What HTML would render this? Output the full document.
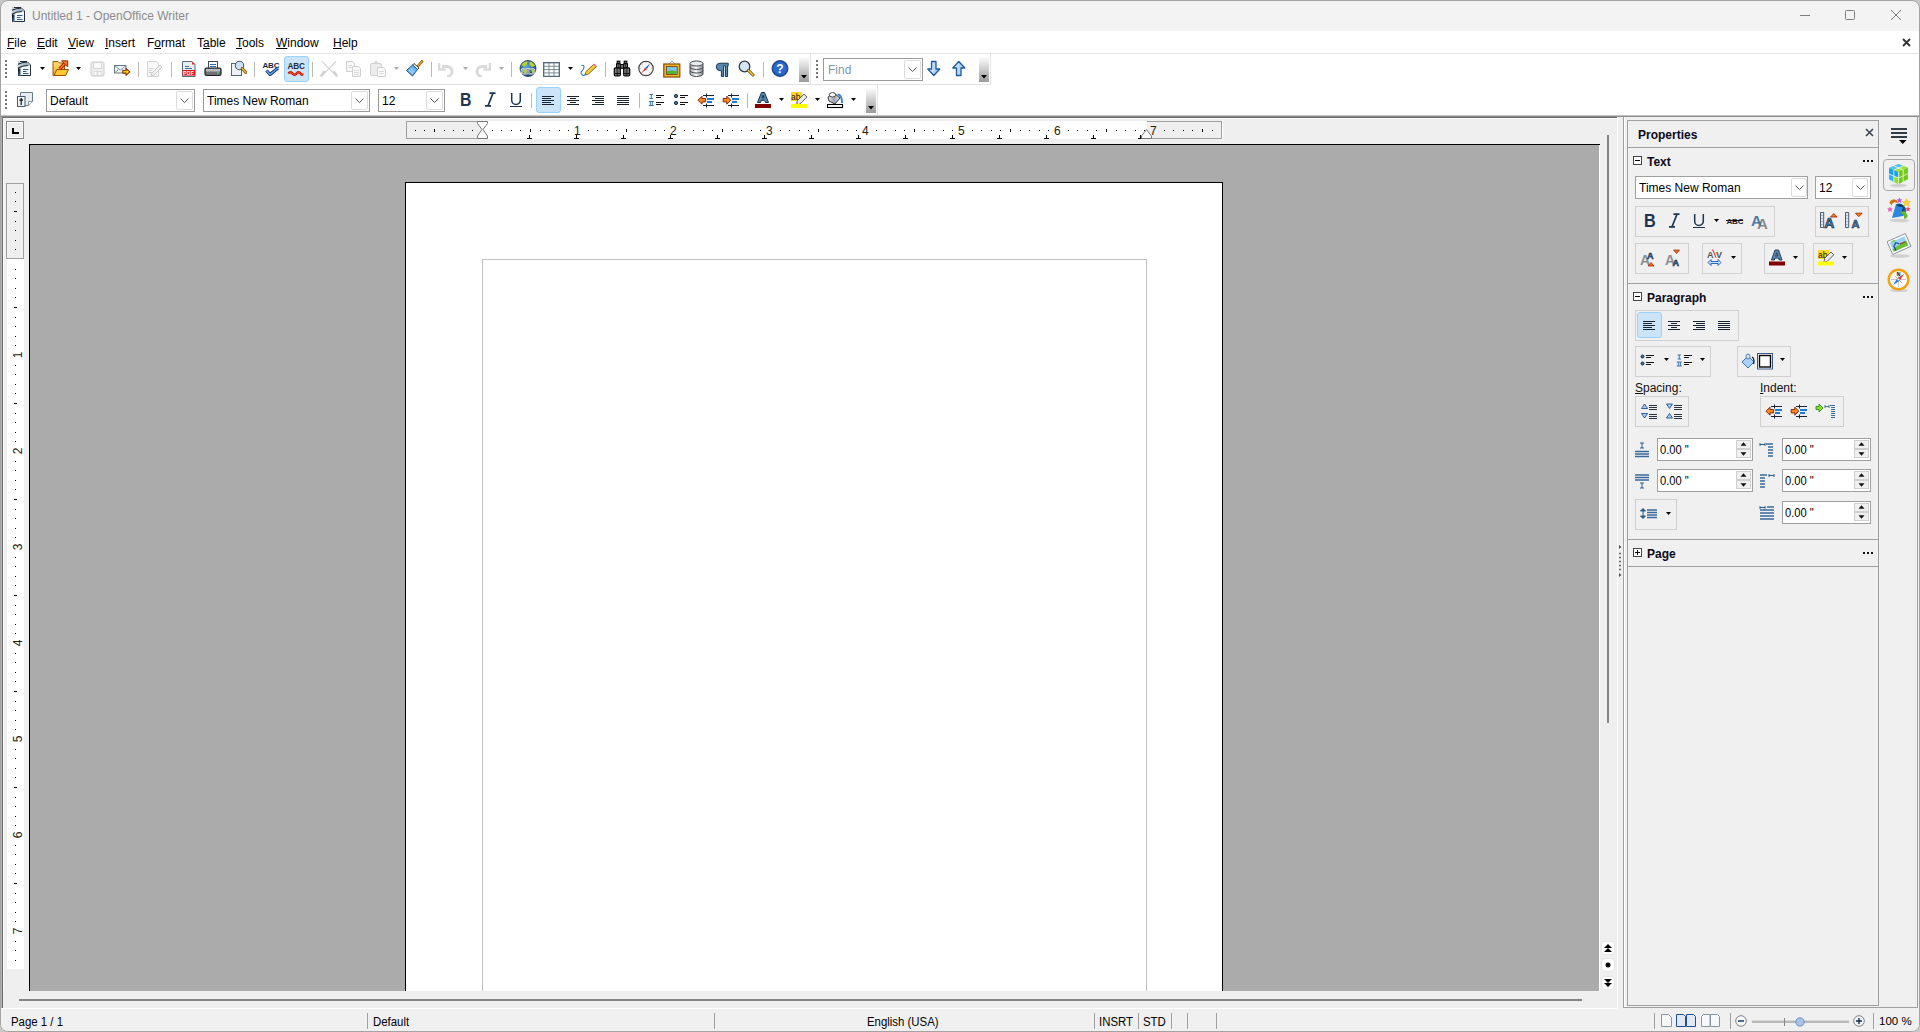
<!DOCTYPE html>
<html><head><meta charset="utf-8"><style>
*{box-sizing:border-box}
html,body{margin:0;padding:0;width:1920px;height:1032px;overflow:hidden;background:#c8c8c8;font-family:"Liberation Sans",sans-serif;font-size:12px;color:#000}
.a{position:absolute}
.t{position:absolute;white-space:pre;line-height:1}
svg{shape-rendering:geometricPrecision}
</style></head><body>
<div class="a" style="left:0px;top:0px;width:1920px;height:1032px;border:1px solid #a3a3a3;border-radius:8px;background:#f3f3f3"></div>
<svg class="a" style="left:11px;top:6px" width="15" height="17" viewBox="0 0 15 17"><defs><linearGradient id="gti" x1="0" y1="0" x2="1" y2="1"><stop offset="0" stop-color="#000"/><stop offset="1" stop-color="#5a8ab8"/></linearGradient>
<linearGradient id="gtib" x1="0" y1="0" x2="1" y2="0"><stop offset="0" stop-color="#c8d4de"/><stop offset="1" stop-color="#8aa0b4"/></linearGradient></defs>
<path d="M1.5 1.5H10l3.5 3.5v10.5h-12z" fill="#f6f9fc" stroke="#252e38" stroke-width="1"/>
<path d="M1 1h2v2.5q4-1.5 7-1l3.5 3.3Q8 4.5 3.5 8H1z" fill="url(#gtib)"/>
<path d="M1 4.2Q5.5 2 10 2.2" stroke="#1e2a36" stroke-width="1.1" fill="none"/>
<path d="M0.8 8.3Q5 5.5 11 5.5" stroke="#2a3a4a" stroke-width="1.1" fill="none"/>
<path d="M1 8.5h2.6V16H1z" fill="url(#gti)"/>
<path d="M6 9.5h5.5M6 11.5h3.5M6 13.5h5.5" stroke="#2e5a88" stroke-width="1"/></svg>
<div class="t" style="left:32px;top:10px;color:#8c8c8c;font-size:12px">Untitled 1 - OpenOffice Writer</div>
<div class="a" style="left:1800px;top:15px;width:10px;height:1px;background:#7d7d7d"></div>
<div class="a" style="left:1845px;top:10px;width:10px;height:10px;border:1px solid #7d7d7d;border-radius:1.5px"></div>
<svg class="a" style="left:1891px;top:10px" width="10" height="10" viewBox="0 0 10 10"><path d="M0 0L10 10M10 0L0 10" stroke="#7d7d7d" stroke-width="1"/></svg>
<div class="a" style="left:1px;top:31px;width:1918px;height:22px;background:#fff"></div>
<div class="a" style="left:1px;top:53px;width:1918px;height:1px;background:#e5e5e5"></div>
<div class="t" style="left:7px;top:37px;font-size:12px"><span style="text-decoration:underline;text-underline-offset:1px">F</span>ile</div>
<div class="t" style="left:37px;top:37px;font-size:12px"><span style="text-decoration:underline;text-underline-offset:1px">E</span>dit</div>
<div class="t" style="left:68px;top:37px;font-size:12px"><span style="text-decoration:underline;text-underline-offset:1px">V</span>iew</div>
<div class="t" style="left:105px;top:37px;font-size:12px"><span style="text-decoration:underline;text-underline-offset:1px">I</span>nsert</div>
<div class="t" style="left:147px;top:37px;font-size:12px">F<span style="text-decoration:underline;text-underline-offset:1px">o</span>rmat</div>
<div class="t" style="left:197px;top:37px;font-size:12px">T<span style="text-decoration:underline;text-underline-offset:1px">a</span>ble</div>
<div class="t" style="left:236px;top:37px;font-size:12px"><span style="text-decoration:underline;text-underline-offset:1px">T</span>ools</div>
<div class="t" style="left:276px;top:37px;font-size:12px"><span style="text-decoration:underline;text-underline-offset:1px">W</span>indow</div>
<div class="t" style="left:333px;top:37px;font-size:12px"><span style="text-decoration:underline;text-underline-offset:1px">H</span>elp</div>
<svg class="a" style="left:1902px;top:38px" width="9" height="9" viewBox="0 0 9 9"><path d="M1 1L8 8M8 1L1 8" stroke="#333" stroke-width="1.8"/></svg>
<div class="a" style="left:1px;top:54px;width:1918px;height:61px;background:#fff"></div>
<div class="a" style="left:1px;top:84px;width:990px;height:1px;background:#e3e3e3"></div>
<div class="a" style="left:810px;top:54px;width:1px;height:30px;background:#e3e3e3"></div>
<div class="a" style="left:990px;top:54px;width:1px;height:31px;background:#e3e3e3"></div>
<div class="a" style="left:877px;top:85px;width:1px;height:30px;background:#e3e3e3"></div>
<div class="a" style="left:1px;top:115px;width:1918px;height:1px;background:#c4c4c4"></div>
<div class="a" style="left:1px;top:116px;width:1918px;height:1px;background:#8a8a8a"></div>
<div class="a" style="left:1px;top:117px;width:1616px;height:1px;background:#6d6d6d"></div>
<div class="a" style="left:5px;top:60px;width:2px;height:2px;background:#6a6a6a;border-radius:.5px"></div>
<div class="a" style="left:5px;top:64px;width:2px;height:2px;background:#6a6a6a;border-radius:.5px"></div>
<div class="a" style="left:5px;top:68px;width:2px;height:2px;background:#6a6a6a;border-radius:.5px"></div>
<div class="a" style="left:5px;top:72px;width:2px;height:2px;background:#6a6a6a;border-radius:.5px"></div>
<div class="a" style="left:5px;top:76px;width:2px;height:2px;background:#6a6a6a;border-radius:.5px"></div>
<div class="a" style="left:5px;top:91px;width:2px;height:2px;background:#6a6a6a;border-radius:.5px"></div>
<div class="a" style="left:5px;top:95px;width:2px;height:2px;background:#6a6a6a;border-radius:.5px"></div>
<div class="a" style="left:5px;top:99px;width:2px;height:2px;background:#6a6a6a;border-radius:.5px"></div>
<div class="a" style="left:5px;top:103px;width:2px;height:2px;background:#6a6a6a;border-radius:.5px"></div>
<div class="a" style="left:5px;top:107px;width:2px;height:2px;background:#6a6a6a;border-radius:.5px"></div>
<div class="a" style="left:816px;top:60px;width:2px;height:2px;background:#6a6a6a;border-radius:.5px"></div>
<div class="a" style="left:816px;top:64px;width:2px;height:2px;background:#6a6a6a;border-radius:.5px"></div>
<div class="a" style="left:816px;top:68px;width:2px;height:2px;background:#6a6a6a;border-radius:.5px"></div>
<div class="a" style="left:816px;top:72px;width:2px;height:2px;background:#6a6a6a;border-radius:.5px"></div>
<div class="a" style="left:816px;top:76px;width:2px;height:2px;background:#6a6a6a;border-radius:.5px"></div>
<svg class="a" style="left:17px;top:60px" width="15" height="17" viewBox="0 0 15 17"><defs><linearGradient id="gnd" x1="0" y1="0" x2="1" y2="1"><stop offset="0" stop-color="#000"/><stop offset="1" stop-color="#5a8ab8"/></linearGradient>
<linearGradient id="gndb" x1="0" y1="0" x2="1" y2="0"><stop offset="0" stop-color="#c8d4de"/><stop offset="1" stop-color="#8aa0b4"/></linearGradient></defs>
<path d="M1.5 1.5H10l3.5 3.5v10.5h-12z" fill="#f6f9fc" stroke="#252e38" stroke-width="1"/>
<path d="M1 1h2v2.5q4-1.5 7-1l3.5 3.3Q8 4.5 3.5 8H1z" fill="url(#gndb)"/>
<path d="M1 4.2Q5.5 2 10 2.2" stroke="#1e2a36" stroke-width="1.1" fill="none"/>
<path d="M0.8 8.3Q5 5.5 11 5.5" stroke="#2a3a4a" stroke-width="1.1" fill="none"/>
<path d="M1 8.5h2.6V16H1z" fill="url(#gnd)"/>
<path d="M6 9.5h5.5M6 11.5h3.5M6 13.5h5.5" stroke="#2e5a88" stroke-width="1"/></svg>
<svg class="a" style="left:40px;top:67px" width="5" height="3" viewBox="0 0 5 3"><path d="M0 0h5L2.5 3z" fill="#000"/></svg>
<svg class="a" style="left:52px;top:60px" width="17" height="17" viewBox="0 0 17 17"><defs><linearGradient id="gfd" x1="0" y1="0" x2="0" y2="1"><stop offset="0" stop-color="#ffe070"/><stop offset="1" stop-color="#f0b020"/></linearGradient></defs>
<path d="M1 15.5V1.5h5l1.5 1.5h5v12.5z" fill="url(#gfd)" stroke="#9a5000" stroke-width="1"/>
<path d="M2 15.5L4.8 9.5h11.7l-2.8 6z" fill="#fcc830" stroke="#9a5000" stroke-width="1" stroke-linejoin="round"/>
<path d="M7.5 9L13 3.5" stroke="#9a2000" stroke-width="3.4"/><path d="M7.5 9L13 3.5" stroke="#ff7020" stroke-width="1.7"/>
<path d="M9.5 0.8h6.2V7z" fill="#ff7020" stroke="#9a2000" stroke-width=".9" stroke-linejoin="round"/></svg>
<svg class="a" style="left:76px;top:67px" width="5" height="3" viewBox="0 0 5 3"><path d="M0 0h5L2.5 3z" fill="#000"/></svg>
<svg class="a" style="left:90px;top:61px" width="15" height="16" viewBox="0 0 15 16"><rect x="1" y="1" width="13" height="14" rx="1.5" fill="#efefef" stroke="#c9c9c9"/>
<rect x="3.5" y="1.5" width="8" height="6" fill="#fafafa" stroke="#d6d6d6"/>
<rect x="4" y="10.5" width="3" height="4" fill="#fff" stroke="#d0d0d0" stroke-width=".7"/><rect x="8" y="10.5" width="3" height="4" fill="#fff" stroke="#d0d0d0" stroke-width=".7"/></svg>
<svg class="a" style="left:113px;top:63px" width="18" height="13" viewBox="0 0 18 13"><rect x="1.5" y="2.5" width="11.5" height="7.5" fill="#eef3f8" stroke="#66778a"/>
<path d="M2 3l5.3 4 5.3-4M2 9.5l3.5-3M12.5 9.5l-3.5-3" stroke="#7a8a9a" fill="none" stroke-width=".9"/>
<path d="M9.8 7.5h3.2V5.3l3.8 3.5-3.8 3.5v-2.2H9.8z" fill="#ffc828" stroke="#8a3a00" stroke-width="1.1" stroke-linejoin="round"/></svg>
<div class="a" style="left:138px;top:62px;width:1px;height:15px;background:#b8b8b8"></div>
<svg class="a" style="left:146px;top:61px" width="17" height="16" viewBox="0 0 17 16"><path d="M1.5 0.5h9l2 2v13h-11z" fill="#f8f8f8" stroke="#d4d4d4"/>
<path d="M3 7.5h4M3 9.5h3M3 11.5h4" stroke="#cfcfcf"/>
<path d="M6 12l8-8 2 2-8 8-3 1z" fill="#f2f2f2" stroke="#c8c8c8"/></svg>
<div class="a" style="left:171px;top:62px;width:1px;height:15px;background:#b8b8b8"></div>
<svg class="a" style="left:181px;top:61px" width="15" height="16" viewBox="0 0 15 16"><path d="M1.5 0.5h9.5l3 3v12h-12.5z" fill="#e9eef3" stroke="#56697c"/>
<path d="M11 0.5l3 3h-3z" fill="#e03030"/>
<path d="M4 5.5h4M4 7.5h7" stroke="#3b70a8" stroke-width="1"/>
<rect x="1.5" y="9" width="12.5" height="5.5" fill="#e3141b"/>
<text x="7.7" y="13.8" font-family="Liberation Sans" font-weight="700" font-size="5.2" fill="#fff" text-anchor="middle" letter-spacing=".3">PDF</text></svg>
<svg class="a" style="left:204px;top:60px" width="18" height="17" viewBox="0 0 18 17"><rect x="4.5" y="1.5" width="9" height="8" fill="#fff" stroke="#3a4a5a"/>
<path d="M6 4.5h6M6 6.5h6" stroke="#2f6aa6" stroke-width="1"/>
<rect x="1" y="8" width="16" height="7.5" rx="1.5" fill="#6f7378" stroke="#1b1f24" stroke-width="1.2"/>
<rect x="2" y="9" width="14" height="2.5" fill="#b8bcc0"/>
<circle cx="14" cy="12.6" r=".9" fill="#4fd14f"/></svg>
<svg class="a" style="left:230px;top:60px" width="17" height="18" viewBox="0 0 17 18"><rect x="1.5" y="3.5" width="10" height="12" fill="#eef2f6" stroke="#55687b"/>
<circle cx="9.5" cy="5.5" r="4.2" fill="#cfe2f5" stroke="#4b5b6b" stroke-width="1.1"/>
<path d="M12.2 8.5l3.6 4" stroke="#5a4200" stroke-width="2.8" stroke-linecap="round"/><path d="M12.2 8.5l3.6 4" stroke="#f0c030" stroke-width="1.6" stroke-linecap="round"/></svg>
<div class="a" style="left:254px;top:62px;width:1px;height:15px;background:#b8b8b8"></div>
<svg class="a" style="left:262px;top:60px" width="18" height="17" viewBox="0 0 18 17"><text x="0.5" y="8.2" font-family="Liberation Sans" font-weight="700" font-size="8" fill="#1c2c3a" letter-spacing="-.2">ABC</text>
<path d="M4.5 10.5l3.5 4 8-6.5" stroke="#0e2a66" stroke-width="3.2" fill="none" stroke-linejoin="round"/>
<path d="M4.5 10.5l3.5 4 8-6.5" stroke="#5aa8f0" stroke-width="1.6" fill="none" stroke-linejoin="round"/></svg>
<div class="a" style="left:284px;top:56px;width:25px;height:26px;background:#cce4f7;border:1px solid #99d1ff;border-radius:3px"></div>
<svg class="a" style="left:287px;top:61px" width="18" height="16" viewBox="0 0 18 16"><text x="0.6" y="8" font-family="Liberation Sans" font-weight="700" font-size="8.2" fill="#1c2c3a" letter-spacing="-.2">ABC</text>
<path d="M1.5 12.5q2-2.5 4 0t4 0 4 0 2 0" stroke="#c00000" stroke-width="2.4" fill="none"/>
<path d="M1.5 12.5q2-2.5 4 0t4 0 4 0 2 0" stroke="#ff6a20" stroke-width="1" fill="none"/></svg>
<div class="a" style="left:312px;top:62px;width:1px;height:15px;background:#b8b8b8"></div>
<svg class="a" style="left:320px;top:60px" width="18" height="17" viewBox="0 0 18 17"><path d="M2 1.5l14 14M16 1.5L2 15.5" stroke="#d6d6d6" stroke-width="1.1"/>
<path d="M4 12l-2.5 3.5M14 12l2.5 3.5" stroke="#d0d0d0" stroke-width="2.6" stroke-linecap="round"/></svg>
<svg class="a" style="left:345px;top:60px" width="17" height="17" viewBox="0 0 17 17"><path d="M1.5 1.5h6l2 2v8h-8z" fill="#f8f8f8" stroke="#d0d0d0"/>
<path d="M7.5 6.5h6l2 2v8h-8z" fill="#f8f8f8" stroke="#d0d0d0"/>
<path d="M3 5.5h4M3 7.5h4M9 10.5h5M9 12.5h5M9 14.5h5" stroke="#dcdcdc" stroke-width="1"/></svg>
<svg class="a" style="left:369px;top:60px" width="22" height="17" viewBox="0 0 22 17"><rect x="1.5" y="3.5" width="11" height="12" rx="1.5" fill="#ececec" stroke="#d0d0d0"/>
<path d="M4.5 3.5l2.5-2.5 2.5 2.5z" fill="#f4f4f4" stroke="#cfcfcf"/>
<path d="M8.5 7.5h6l2 2v7h-8z" fill="#fafafa" stroke="#d0d0d0"/>
<path d="M10 11.5h5M10 13.5h5" stroke="#dcdcdc" stroke-width="1"/></svg>
<svg class="a" style="left:394px;top:67px" width="5" height="3" viewBox="0 0 5 3"><path d="M0 0h5L2.5 3z" fill="#aaaaaa"/></svg>
<svg class="a" style="left:406px;top:60px" width="18" height="17" viewBox="0 0 18 17"><path d="M11.5 6.5l4.5-5" stroke="#6a4a00" stroke-width="2.6" stroke-linecap="round"/><path d="M11.5 6.5l4.5-5" stroke="#e0a020" stroke-width="1.4" stroke-linecap="round"/>
<path d="M8 3.5l5 4.5-1.5 1.5-5-4.5z" fill="#fff" stroke="#222" stroke-width=".9"/>
<path d="M6.5 5l5 4.5-5 6.5-6-5.5z" fill="#6cb4ec" stroke="#1d4f9a" stroke-width="1"/>
<path d="M3 10l4 3.5M4.5 8.5l4 3.5" stroke="#d6ecff" stroke-width=".9"/></svg>
<div class="a" style="left:431px;top:62px;width:1px;height:15px;background:#b8b8b8"></div>
<svg class="a" style="left:438px;top:61px" width="17" height="16" viewBox="0 0 17 16"><path d="M4 5.5h5a5 5 0 010 10" stroke="#dadada" stroke-width="3" fill="none"/>
<path d="M1 2v6.5h6.5" stroke="#dadada" stroke-width="2.6" fill="none" stroke-linejoin="round"/></svg>
<svg class="a" style="left:463px;top:67px" width="5" height="3" viewBox="0 0 5 3"><path d="M0 0h5L2.5 3z" fill="#aaaaaa"/></svg>
<svg class="a" style="left:474px;top:61px" width="17" height="16" viewBox="0 0 17 16"><path d="M13 5.5H8a5 5 0 000 10" stroke="#dadada" stroke-width="3" fill="none"/>
<path d="M16 2v6.5H9.5" stroke="#dadada" stroke-width="2.6" fill="none" stroke-linejoin="round"/></svg>
<svg class="a" style="left:499px;top:67px" width="5" height="3" viewBox="0 0 5 3"><path d="M0 0h5L2.5 3z" fill="#aaaaaa"/></svg>
<div class="a" style="left:511px;top:62px;width:1px;height:15px;background:#b8b8b8"></div>
<svg class="a" style="left:519px;top:60px" width="18" height="18" viewBox="0 0 18 18"><defs><radialGradient id="ggl" cx=".4" cy=".35" r=".7"><stop offset="0" stop-color="#5aa8e8"/><stop offset="1" stop-color="#12406e"/></radialGradient></defs>
<circle cx="9" cy="8.5" r="8" fill="url(#ggl)" stroke="#1a3550" stroke-width=".8"/>
<path d="M2.5 5q2-4 6-3.5l-.5 3L5 7z M10.5 1.5q4 .5 5.5 4.5l-3 1-2.5-2z M4 9l4 .5-1 5-3-3z M12 10l3-1-1 5z" fill="#b8d030"/>
<rect x="2.5" y="8.8" width="7" height="5" rx="2.5" fill="none" stroke="#fff" stroke-width="1.6"/>
<rect x="8.5" y="8.8" width="7" height="5" rx="2.5" fill="none" stroke="#fff" stroke-width="1.6"/>
<rect x="2.5" y="8.8" width="7" height="5" rx="2.5" fill="none" stroke="#2a3a20" stroke-width=".5"/>
<rect x="8.5" y="8.8" width="7" height="5" rx="2.5" fill="none" stroke="#2a3a20" stroke-width=".5"/></svg>
<svg class="a" style="left:543px;top:62px" width="17" height="15" viewBox="0 0 17 15"><rect x="0.5" y="0.5" width="16" height="14" fill="#7a8a9a" stroke="#5a6a7a"/>
<g fill="#fff"><rect x="1.5" y="1.5" width="4" height="2.3"/><rect x="6.5" y="1.5" width="4" height="2.3"/><rect x="11.5" y="1.5" width="4" height="2.3"/>
<rect x="1.5" y="4.8" width="4" height="2.3"/><rect x="6.5" y="4.8" width="4" height="2.3"/><rect x="11.5" y="4.8" width="4" height="2.3"/>
<rect x="1.5" y="8.1" width="4" height="2.3"/><rect x="6.5" y="8.1" width="4" height="2.3"/><rect x="11.5" y="8.1" width="4" height="2.3"/>
<rect x="1.5" y="11.4" width="4" height="2.3"/><rect x="6.5" y="11.4" width="4" height="2.3"/><rect x="11.5" y="11.4" width="4" height="2.3"/></g></svg>
<svg class="a" style="left:568px;top:67px" width="5" height="3" viewBox="0 0 5 3"><path d="M0 0h5L2.5 3z" fill="#000"/></svg>
<svg class="a" style="left:580px;top:63px" width="18" height="13" viewBox="0 0 18 13"><path d="M1.5 2.5q2.5-1 2.5 1.5t-2 4 0 3.5 3 0" stroke="#2f7ad8" stroke-width="1.1" fill="none"/>
<path d="M5 12l1-3.5 8-7.5 2.5 2.5-8 7.5z" fill="#f5cc30" stroke="#6a4a10" stroke-width=".8"/>
<path d="M13 1.5l2.5 2.5 1-1-2.5-2.5z" fill="#ff6a80"/></svg>
<div class="a" style="left:605px;top:62px;width:1px;height:15px;background:#b8b8b8"></div>
<svg class="a" style="left:613px;top:60px" width="18" height="17" viewBox="0 0 18 17"><defs><linearGradient id="gbn" x1="0" x2="1"><stop offset="0" stop-color="#b0b0b0"/><stop offset=".5" stop-color="#3a3a3a"/><stop offset="1" stop-color="#a8a8a8"/></linearGradient></defs>
<rect x="4.2" y="1.2" width="2.6" height="2.3" fill="#777" stroke="#000" stroke-width="1.1"/><rect x="11.2" y="1.2" width="2.6" height="2.3" fill="#777" stroke="#000" stroke-width="1.1"/>
<rect x="6.5" y="4.5" width="5" height="3.8" fill="#555" stroke="#000" stroke-width="1"/>
<path d="M7 6h4" stroke="#999" stroke-width=".8"/>
<rect x="3.5" y="3.6" width="3.8" height="4.5" rx=".8" fill="url(#gbn)" stroke="#000" stroke-width="1.1"/><rect x="10.7" y="3.6" width="3.8" height="4.5" rx=".8" fill="url(#gbn)" stroke="#000" stroke-width="1.1"/>
<rect x="1.3" y="7.8" width="6" height="8.2" rx="1.2" fill="url(#gbn)" stroke="#000" stroke-width="1.2"/><rect x="10.7" y="7.8" width="6" height="8.2" rx="1.2" fill="url(#gbn)" stroke="#000" stroke-width="1.2"/>
<path d="M1.5 13.5h5.6M10.9 13.5h5.6" stroke="#111" stroke-width="1"/></svg>
<svg class="a" style="left:638px;top:60px" width="16" height="17" viewBox="0 0 16 17"><circle cx="8" cy="8.5" r="7.2" fill="#f8f8f8" stroke="#333" stroke-width="1.1"/>
<g stroke="#888" stroke-width=".6"><path d="M8 2v1.3M8 13.7V15M1.5 8.5h1.3M13.2 8.5h1.3M3.4 4l.9.9M11.7 12.2l.9.9M12.6 4l-.9.9M4.3 12.2l-.9.9"/></g>
<path d="M12 3.5L9 9 7 8z" fill="#2b5ed8"/><path d="M3.5 13L7 8 9 9z" fill="#e52020"/></svg>
<svg class="a" style="left:663px;top:60px" width="18" height="18" viewBox="0 0 18 18"><path d="M6 4l3-3 3 3" stroke="#90a0b0" stroke-width=".8" fill="none"/>
<rect x="0.8" y="4" width="16" height="13" fill="#f2b82c" stroke="#8a4a00" stroke-width="1.2"/>
<rect x="3" y="6.2" width="11.6" height="8.6" fill="#6a3a10"/>
<rect x="3.8" y="7" width="10" height="7" fill="#7cc6f0"/>
<path d="M3.8 11.5q5-2 10 0V14h-10z" fill="#58b030"/></svg>
<svg class="a" style="left:689px;top:60px" width="15" height="17" viewBox="0 0 15 17"><defs><linearGradient id="gdb" x1="0" x2="1"><stop offset="0" stop-color="#9aa0a6"/><stop offset=".45" stop-color="#fafafa"/><stop offset="1" stop-color="#80868c"/></linearGradient></defs>
<path d="M1 3.5v10.5a6.5 2.5 0 0013 0V3.5" fill="url(#gdb)" stroke="#4a4f55"/>
<ellipse cx="7.5" cy="3.5" rx="6.5" ry="2.5" fill="#e6eaee" stroke="#4a4f55"/>
<path d="M1 7a6.5 2.5 0 0013 0M1 10.5a6.5 2.5 0 0013 0" stroke="#4a4f55" fill="none"/></svg>
<svg class="a" style="left:715px;top:62px" width="14" height="15" viewBox="0 0 14 15"><path d="M5 1.2H13.2v2.6h-.6v10.7h-2.2V3.8H8.6v10.7H6.4V8.6H5A3.7 3.7 0 015 1.2z" fill="#5a87ad" stroke="#12314f" stroke-width=".95" stroke-linejoin="round"/></svg>
<svg class="a" style="left:738px;top:60px" width="17" height="17" viewBox="0 0 17 17"><circle cx="6.5" cy="6.5" r="5.3" fill="#d4e6f6" stroke="#333c45" stroke-width="1.3"/>
<path d="M10.5 10.5l4.5 4.5" stroke="#5a4200" stroke-width="3" stroke-linecap="round"/><path d="M10.5 10.5l4.5 4.5" stroke="#f2c230" stroke-width="1.7" stroke-linecap="round"/></svg>
<div class="a" style="left:763px;top:62px;width:1px;height:15px;background:#b8b8b8"></div>
<svg class="a" style="left:771px;top:60px" width="18" height="18" viewBox="0 0 18 18"><circle cx="9" cy="8.5" r="8" fill="#1e56b0" stroke="#0c2f70" stroke-width=".8"/>
<circle cx="9" cy="8.5" r="6.5" fill="#2a6ad0"/>
<text x="9" y="13.2" font-family="Liberation Sans" font-weight="700" font-size="12" fill="#fff" text-anchor="middle">?</text></svg>
<div class="a" style="left:799px;top:57px;width:10px;height:25px;background:linear-gradient(#fdfdfd,#9b9b9b)"></div>
<svg class="a" style="left:801px;top:75px" width="6" height="4" viewBox="0 0 6 4"><path d="M0 0h6L3 3.5z" fill="#000"/></svg>
<div class="a" style="left:823px;top:58px;width:100px;height:23px;background:#fff;border:1px solid #9a9a9a"></div>
<div class="t" style="left:828px;top:64px;font-size:12px;color:#8496aa">Find</div>
<div class="a" style="left:904px;top:60px;width:17px;height:19px;background:#fff;border:1px solid #dcdcdc;border-radius:2px"></div>
<svg class="a" style="left:908px;top:67px" width="9" height="5" viewBox="0 0 9 5"><path d="M0.5 0.5l4 4 4-4" stroke="#555" fill="none"/></svg>
<svg class="a" style="left:926px;top:60px" width="16" height="17" viewBox="0 0 16 17"><defs><linearGradient id="gad" x1="0" x2="1"><stop offset="0" stop-color="#e8f4ff"/><stop offset="1" stop-color="#8cc0ec"/></linearGradient></defs><path d="M5.5 1.5h4.5v7.5h3.8L7.8 15.5 1.8 9h3.7z" fill="url(#gad)" stroke="#1e5a9e" stroke-width="1.3" stroke-linejoin="round"/></svg>
<svg class="a" style="left:951px;top:60px" width="16" height="17" viewBox="0 0 16 17"><path d="M5.5 15.5h4.5V8h3.8L7.8 1.5 1.8 8h3.7z" fill="url(#gad)" stroke="#1e5a9e" stroke-width="1.3" stroke-linejoin="round"/></svg>
<div class="a" style="left:979px;top:57px;width:10px;height:25px;background:linear-gradient(#fdfdfd,#9b9b9b)"></div>
<svg class="a" style="left:981px;top:75px" width="6" height="4" viewBox="0 0 6 4"><path d="M0 0h6L3 3.5z" fill="#000"/></svg>
<svg class="a" style="left:16px;top:91px" width="18" height="17" viewBox="0 0 18 17"><path d="M4.5 1.5h12v9l-4 4h-8z" fill="#e6ecf2" stroke="#6a7a8a"/>
<path d="M12.5 14.5v-4h4" fill="#fff" stroke="#6a7a8a" stroke-width=".8"/>
<rect x="1.5" y="5.5" width="7.5" height="10" fill="#eef2f6" stroke="#4a5a6a"/>
<path d="M5.2 7v7M3.5 9h3.5" stroke="#222" stroke-width="1.3"/></svg>
<div class="a" style="left:46px;top:89px;width:149px;height:23px;background:#fff;border:1px solid #9a9a9a"></div>
<div class="t" style="left:50px;top:95px;font-size:12px">Default</div>
<div class="a" style="left:176px;top:91px;width:17px;height:19px;background:#fff;border:1px solid #dcdcdc;border-radius:2px"></div>
<svg class="a" style="left:180px;top:98px" width="9" height="5" viewBox="0 0 9 5"><path d="M0.5 0.5l4 4 4-4" stroke="#555" fill="none"/></svg>
<div class="a" style="left:203px;top:89px;width:167px;height:23px;background:#fff;border:1px solid #9a9a9a"></div>
<div class="t" style="left:207px;top:95px;font-size:12px">Times New Roman</div>
<div class="a" style="left:351px;top:91px;width:17px;height:19px;background:#fff;border:1px solid #dcdcdc;border-radius:2px"></div>
<svg class="a" style="left:355px;top:98px" width="9" height="5" viewBox="0 0 9 5"><path d="M0.5 0.5l4 4 4-4" stroke="#555" fill="none"/></svg>
<div class="a" style="left:378px;top:89px;width:67px;height:23px;background:#fff;border:1px solid #9a9a9a"></div>
<div class="t" style="left:382px;top:95px;font-size:12px">12</div>
<div class="a" style="left:426px;top:91px;width:17px;height:19px;background:#fff;border:1px solid #dcdcdc;border-radius:2px"></div>
<svg class="a" style="left:430px;top:98px" width="9" height="5" viewBox="0 0 9 5"><path d="M0.5 0.5l4 4 4-4" stroke="#555" fill="none"/></svg>
<div class="t" style="left:460px;top:91px;font-family:'Liberation Sans';font-weight:700;font-size:18px;color:#1c3550;transform:scaleX(.88);transform-origin:left">B</div>
<svg class="a" style="left:484px;top:92px" width="13" height="15" viewBox="0 0 13 15"><path d="M5.5 1.2h6M1 13.8h6M9 1.2L4 13.8" stroke="#1c3550" stroke-width="1.7" fill="none"/></svg>
<svg class="a" style="left:509px;top:92px" width="14" height="16" viewBox="0 0 14 16"><path d="M2.7 1v7.2a4.3 4.3 0 008.6 0V1" stroke="#1c3550" stroke-width="1.5" fill="none"/><path d="M1 14.5h12" stroke="#1c3550" stroke-width="1"/></svg>
<div class="a" style="left:531px;top:93px;width:1px;height:15px;background:#b8b8b8"></div>
<div class="a" style="left:536px;top:87px;width:25px;height:26px;background:#cce4f7;border:1px solid #99d1ff;border-radius:3px"></div>
<div class="a" style="left:542px;top:96px;width:12px;height:1px;background:#1a2430"></div>
<div class="a" style="left:542px;top:98px;width:9px;height:1px;background:#1a2430"></div>
<div class="a" style="left:542px;top:100px;width:12px;height:1px;background:#1a2430"></div>
<div class="a" style="left:542px;top:102px;width:9px;height:1px;background:#1a2430"></div>
<div class="a" style="left:542px;top:104px;width:12px;height:1px;background:#1a2430"></div>
<div class="a" style="left:567px;top:96px;width:12px;height:1px;background:#1a2430"></div>
<div class="a" style="left:570px;top:98px;width:6px;height:1px;background:#1a2430"></div>
<div class="a" style="left:567px;top:100px;width:12px;height:1px;background:#1a2430"></div>
<div class="a" style="left:570px;top:102px;width:6px;height:1px;background:#1a2430"></div>
<div class="a" style="left:567px;top:104px;width:12px;height:1px;background:#1a2430"></div>
<div class="a" style="left:592px;top:96px;width:12px;height:1px;background:#1a2430"></div>
<div class="a" style="left:595px;top:98px;width:9px;height:1px;background:#1a2430"></div>
<div class="a" style="left:592px;top:100px;width:12px;height:1px;background:#1a2430"></div>
<div class="a" style="left:595px;top:102px;width:9px;height:1px;background:#1a2430"></div>
<div class="a" style="left:592px;top:104px;width:12px;height:1px;background:#1a2430"></div>
<div class="a" style="left:617px;top:96px;width:12px;height:1px;background:#1a2430"></div>
<div class="a" style="left:617px;top:98px;width:12px;height:1px;background:#1a2430"></div>
<div class="a" style="left:617px;top:100px;width:12px;height:1px;background:#1a2430"></div>
<div class="a" style="left:617px;top:102px;width:12px;height:1px;background:#1a2430"></div>
<div class="a" style="left:617px;top:104px;width:12px;height:1px;background:#1a2430"></div>
<div class="a" style="left:639px;top:93px;width:1px;height:15px;background:#b8b8b8"></div>
<svg class="a" style="left:648px;top:93px" width="17" height="14" viewBox="0 0 17 14"><path d="M1.5 1.5h3.5M1.5 5.5h3.5M3.25 1.5v4M0.8 8.5h5M0.8 12.5h5M2.3 8.5v4M4.3 8.5v4" stroke="#3a76a8" stroke-width="1"/>
<path d="M8 2.5h8M8 4.5h5M8 9.5h8M8 11.5h5" stroke="#111" stroke-width="1"/></svg>
<svg class="a" style="left:673px;top:93px" width="16" height="14" viewBox="0 0 16 14"><circle cx="3" cy="3" r="1.6" fill="#4a7aa0" stroke="#0e2a48" stroke-width="1"/><circle cx="3" cy="10" r="1.6" fill="#4a7aa0" stroke="#0e2a48" stroke-width="1"/>
<path d="M7 2.5h8M7 4.5h5M7 9.5h8M7 11.5h5" stroke="#111" stroke-width="1"/></svg>
<svg class="a" style="left:697px;top:92px" width="18" height="17" viewBox="0 0 18 17"><path d="M6 3.5h11M6 13.5h11M9.5 1.5v4M9.5 11.5v4" stroke="#1a2430" stroke-width="1"/><rect x="10" y="6" width="7" height="2" fill="#1e7ad8"/><rect x="10" y="9" width="5" height="2" fill="#1e7ad8"/><path d="M1 8.2L5 4.2v2.3h3.6v3.4H5v2.3z" fill="#ff8a1a" stroke="#7a1a00" stroke-width=".9" stroke-linejoin="round"/></svg>
<svg class="a" style="left:722px;top:92px" width="18" height="17" viewBox="0 0 18 17"><path d="M6 3.5h11M6 13.5h11M9.5 1.5v4M9.5 11.5v4" stroke="#1a2430" stroke-width="1"/><rect x="10" y="6" width="7" height="2" fill="#1e7ad8"/><rect x="10" y="9" width="5" height="2" fill="#1e7ad8"/><path d="M8.8 8.2L4.8 4.2v2.3H1.2v3.4h3.6v2.3z" fill="#ff8a1a" stroke="#7a1a00" stroke-width=".9" stroke-linejoin="round"/></svg>
<div class="a" style="left:747px;top:93px;width:1px;height:15px;background:#b8b8b8"></div>
<svg class="a" style="left:754px;top:91px" width="18" height="18" viewBox="0 0 18 18"><path d="M3.5 11.5L7.5 1.5h3l4 10h-3l-.8-2.2H7.3l-.8 2.2z M8 7h2l-1-3z" fill="#5a8ab0" stroke="#12314f" stroke-width="1" fill-rule="evenodd"/>
<rect x="1" y="13" width="16" height="4" fill="#800000"/></svg>
<svg class="a" style="left:779px;top:98px" width="5" height="3" viewBox="0 0 5 3"><path d="M0 0h5L2.5 3z" fill="#000"/></svg>
<svg class="a" style="left:790px;top:91px" width="18" height="18" viewBox="0 0 18 18"><rect x="1" y="1" width="11" height="9" fill="#ffd820"/>
<text x="1" y="8.5" font-family="Liberation Sans" font-size="8.5" fill="#111">ab</text>
<path d="M7 10l7-7 3 3-7 7-3 1z" fill="#e8eaec" stroke="#4a5460" stroke-width=".9"/>
<path d="M6.5 11.5l1.5 1.5-2.5 .8z" fill="#f08020"/>
<rect x="1" y="13" width="16" height="4" fill="#ffff00"/></svg>
<svg class="a" style="left:815px;top:98px" width="5" height="3" viewBox="0 0 5 3"><path d="M0 0h5L2.5 3z" fill="#000"/></svg>
<svg class="a" style="left:826px;top:91px" width="18" height="18" viewBox="0 0 18 18"><defs><linearGradient id="gbk" x1="0" x2="1"><stop offset="0" stop-color="#e8ecf0"/><stop offset=".5" stop-color="#9aa4ae"/><stop offset="1" stop-color="#e0e4e8"/></linearGradient></defs>
<path d="M2 6l6-4 6 5-5 6-6-3z" fill="url(#gbk)" stroke="#222" stroke-width=".9"/>
<ellipse cx="6.5" cy="3.8" rx="3.2" ry="2.2" fill="#fff" stroke="#222" stroke-width=".8"/>
<path d="M11.5 3.5q4.5 0 4.5 8.5" stroke="#3a86d0" stroke-width="2" fill="none"/>
<rect x="1.5" y="13.5" width="15" height="3" fill="#fff" stroke="#000" stroke-width="1.1"/></svg>
<svg class="a" style="left:851px;top:98px" width="5" height="3" viewBox="0 0 5 3"><path d="M0 0h5L2.5 3z" fill="#000"/></svg>
<div class="a" style="left:866px;top:88px;width:10px;height:25px;background:linear-gradient(#fdfdfd,#9b9b9b)"></div>
<svg class="a" style="left:868px;top:106px" width="6" height="4" viewBox="0 0 6 4"><path d="M0 0h6L3 3.5z" fill="#000"/></svg>
<div class="a" style="left:1px;top:118px;width:1616px;height:890px;background:#efefef"></div>
<div class="a" style="left:1px;top:117px;width:1px;height:891px;background:#b4b4b4"></div>
<div class="a" style="left:2px;top:117px;width:1px;height:891px;background:#6d6d6d"></div>
<div class="a" style="left:3px;top:118px;width:1614px;height:1px;background:#fafafa"></div>
<div class="a" style="left:3px;top:118px;width:1px;height:890px;background:#fafafa"></div>
<div class="a" style="left:6px;top:121px;width:18px;height:18px;border:1px solid #8a8a8a;background:#eee;box-shadow:inset 0 0 0 1px #fff"></div>
<div class="a" style="left:12px;top:128px;width:2px;height:6px;background:#000"></div>
<div class="a" style="left:12px;top:132px;width:7px;height:2px;background:#000"></div>
<div class="a" style="left:406px;top:121px;width:817px;height:18px;background:#fff"></div>
<div class="a" style="left:406px;top:121px;width:76px;height:18px;background:#efefef;border:1px solid #a0a0a0;border-right:none"></div>
<div class="a" style="left:1147px;top:121px;width:75px;height:18px;background:#efefef;border:1px solid #a0a0a0;border-left:none"></div>
<div class="a" style="left:415px;top:130px;width:1px;height:1px;background:#000"></div>
<div class="a" style="left:424px;top:130px;width:1px;height:1px;background:#000"></div>
<div class="a" style="left:434px;top:129px;width:1px;height:3px;background:#000"></div>
<div class="a" style="left:444px;top:130px;width:1px;height:1px;background:#000"></div>
<div class="a" style="left:453px;top:130px;width:1px;height:1px;background:#000"></div>
<div class="a" style="left:463px;top:130px;width:1px;height:1px;background:#000"></div>
<div class="a" style="left:472px;top:130px;width:1px;height:1px;background:#000"></div>
<div class="a" style="left:492px;top:130px;width:1px;height:1px;background:#000"></div>
<div class="a" style="left:501px;top:130px;width:1px;height:1px;background:#000"></div>
<div class="a" style="left:511px;top:130px;width:1px;height:1px;background:#000"></div>
<div class="a" style="left:520px;top:130px;width:1px;height:1px;background:#000"></div>
<div class="a" style="left:530px;top:129px;width:1px;height:3px;background:#000"></div>
<div class="a" style="left:540px;top:130px;width:1px;height:1px;background:#000"></div>
<div class="a" style="left:549px;top:130px;width:1px;height:1px;background:#000"></div>
<div class="a" style="left:559px;top:130px;width:1px;height:1px;background:#000"></div>
<div class="a" style="left:568px;top:130px;width:1px;height:1px;background:#000"></div>
<div class="t" style="left:574px;top:125px;font-size:12px;color:#2a1a08">1</div>
<div class="a" style="left:588px;top:130px;width:1px;height:1px;background:#000"></div>
<div class="a" style="left:597px;top:130px;width:1px;height:1px;background:#000"></div>
<div class="a" style="left:607px;top:130px;width:1px;height:1px;background:#000"></div>
<div class="a" style="left:616px;top:130px;width:1px;height:1px;background:#000"></div>
<div class="a" style="left:626px;top:129px;width:1px;height:3px;background:#000"></div>
<div class="a" style="left:636px;top:130px;width:1px;height:1px;background:#000"></div>
<div class="a" style="left:645px;top:130px;width:1px;height:1px;background:#000"></div>
<div class="a" style="left:655px;top:130px;width:1px;height:1px;background:#000"></div>
<div class="a" style="left:664px;top:130px;width:1px;height:1px;background:#000"></div>
<div class="t" style="left:670px;top:125px;font-size:12px;color:#2a1a08">2</div>
<div class="a" style="left:684px;top:130px;width:1px;height:1px;background:#000"></div>
<div class="a" style="left:693px;top:130px;width:1px;height:1px;background:#000"></div>
<div class="a" style="left:703px;top:130px;width:1px;height:1px;background:#000"></div>
<div class="a" style="left:712px;top:130px;width:1px;height:1px;background:#000"></div>
<div class="a" style="left:722px;top:129px;width:1px;height:3px;background:#000"></div>
<div class="a" style="left:732px;top:130px;width:1px;height:1px;background:#000"></div>
<div class="a" style="left:741px;top:130px;width:1px;height:1px;background:#000"></div>
<div class="a" style="left:751px;top:130px;width:1px;height:1px;background:#000"></div>
<div class="a" style="left:760px;top:130px;width:1px;height:1px;background:#000"></div>
<div class="t" style="left:766px;top:125px;font-size:12px;color:#2a1a08">3</div>
<div class="a" style="left:780px;top:130px;width:1px;height:1px;background:#000"></div>
<div class="a" style="left:789px;top:130px;width:1px;height:1px;background:#000"></div>
<div class="a" style="left:799px;top:130px;width:1px;height:1px;background:#000"></div>
<div class="a" style="left:808px;top:130px;width:1px;height:1px;background:#000"></div>
<div class="a" style="left:818px;top:129px;width:1px;height:3px;background:#000"></div>
<div class="a" style="left:828px;top:130px;width:1px;height:1px;background:#000"></div>
<div class="a" style="left:837px;top:130px;width:1px;height:1px;background:#000"></div>
<div class="a" style="left:847px;top:130px;width:1px;height:1px;background:#000"></div>
<div class="a" style="left:856px;top:130px;width:1px;height:1px;background:#000"></div>
<div class="t" style="left:862px;top:125px;font-size:12px;color:#2a1a08">4</div>
<div class="a" style="left:876px;top:130px;width:1px;height:1px;background:#000"></div>
<div class="a" style="left:885px;top:130px;width:1px;height:1px;background:#000"></div>
<div class="a" style="left:895px;top:130px;width:1px;height:1px;background:#000"></div>
<div class="a" style="left:904px;top:130px;width:1px;height:1px;background:#000"></div>
<div class="a" style="left:914px;top:129px;width:1px;height:3px;background:#000"></div>
<div class="a" style="left:924px;top:130px;width:1px;height:1px;background:#000"></div>
<div class="a" style="left:933px;top:130px;width:1px;height:1px;background:#000"></div>
<div class="a" style="left:943px;top:130px;width:1px;height:1px;background:#000"></div>
<div class="a" style="left:952px;top:130px;width:1px;height:1px;background:#000"></div>
<div class="t" style="left:958px;top:125px;font-size:12px;color:#2a1a08">5</div>
<div class="a" style="left:972px;top:130px;width:1px;height:1px;background:#000"></div>
<div class="a" style="left:981px;top:130px;width:1px;height:1px;background:#000"></div>
<div class="a" style="left:991px;top:130px;width:1px;height:1px;background:#000"></div>
<div class="a" style="left:1000px;top:130px;width:1px;height:1px;background:#000"></div>
<div class="a" style="left:1010px;top:129px;width:1px;height:3px;background:#000"></div>
<div class="a" style="left:1020px;top:130px;width:1px;height:1px;background:#000"></div>
<div class="a" style="left:1029px;top:130px;width:1px;height:1px;background:#000"></div>
<div class="a" style="left:1039px;top:130px;width:1px;height:1px;background:#000"></div>
<div class="a" style="left:1048px;top:130px;width:1px;height:1px;background:#000"></div>
<div class="t" style="left:1054px;top:125px;font-size:12px;color:#2a1a08">6</div>
<div class="a" style="left:1068px;top:130px;width:1px;height:1px;background:#000"></div>
<div class="a" style="left:1077px;top:130px;width:1px;height:1px;background:#000"></div>
<div class="a" style="left:1087px;top:130px;width:1px;height:1px;background:#000"></div>
<div class="a" style="left:1096px;top:130px;width:1px;height:1px;background:#000"></div>
<div class="a" style="left:1106px;top:129px;width:1px;height:3px;background:#000"></div>
<div class="a" style="left:1116px;top:130px;width:1px;height:1px;background:#000"></div>
<div class="a" style="left:1125px;top:130px;width:1px;height:1px;background:#000"></div>
<div class="a" style="left:1135px;top:130px;width:1px;height:1px;background:#000"></div>
<div class="a" style="left:1144px;top:130px;width:1px;height:1px;background:#000"></div>
<div class="t" style="left:1150px;top:125px;font-size:12px;color:#2a1a08">7</div>
<div class="a" style="left:1164px;top:130px;width:1px;height:1px;background:#000"></div>
<div class="a" style="left:1173px;top:130px;width:1px;height:1px;background:#000"></div>
<div class="a" style="left:1183px;top:130px;width:1px;height:1px;background:#000"></div>
<div class="a" style="left:1192px;top:130px;width:1px;height:1px;background:#000"></div>
<div class="a" style="left:1202px;top:129px;width:1px;height:3px;background:#000"></div>
<div class="a" style="left:1212px;top:130px;width:1px;height:1px;background:#000"></div>
<div class="a" style="left:527px;top:138px;width:5px;height:1px;background:#000"></div>
<div class="a" style="left:529px;top:135px;width:1px;height:3px;background:#000"></div>
<div class="a" style="left:574px;top:138px;width:5px;height:1px;background:#000"></div>
<div class="a" style="left:576px;top:135px;width:1px;height:3px;background:#000"></div>
<div class="a" style="left:621px;top:138px;width:5px;height:1px;background:#000"></div>
<div class="a" style="left:623px;top:135px;width:1px;height:3px;background:#000"></div>
<div class="a" style="left:668px;top:138px;width:5px;height:1px;background:#000"></div>
<div class="a" style="left:670px;top:135px;width:1px;height:3px;background:#000"></div>
<div class="a" style="left:715px;top:138px;width:5px;height:1px;background:#000"></div>
<div class="a" style="left:717px;top:135px;width:1px;height:3px;background:#000"></div>
<div class="a" style="left:762px;top:138px;width:5px;height:1px;background:#000"></div>
<div class="a" style="left:764px;top:135px;width:1px;height:3px;background:#000"></div>
<div class="a" style="left:809px;top:138px;width:5px;height:1px;background:#000"></div>
<div class="a" style="left:811px;top:135px;width:1px;height:3px;background:#000"></div>
<div class="a" style="left:856px;top:138px;width:5px;height:1px;background:#000"></div>
<div class="a" style="left:858px;top:135px;width:1px;height:3px;background:#000"></div>
<div class="a" style="left:903px;top:138px;width:5px;height:1px;background:#000"></div>
<div class="a" style="left:905px;top:135px;width:1px;height:3px;background:#000"></div>
<div class="a" style="left:950px;top:138px;width:5px;height:1px;background:#000"></div>
<div class="a" style="left:952px;top:135px;width:1px;height:3px;background:#000"></div>
<div class="a" style="left:997px;top:138px;width:5px;height:1px;background:#000"></div>
<div class="a" style="left:999px;top:135px;width:1px;height:3px;background:#000"></div>
<div class="a" style="left:1044px;top:138px;width:5px;height:1px;background:#000"></div>
<div class="a" style="left:1046px;top:135px;width:1px;height:3px;background:#000"></div>
<div class="a" style="left:1091px;top:138px;width:5px;height:1px;background:#000"></div>
<div class="a" style="left:1093px;top:135px;width:1px;height:3px;background:#000"></div>
<div class="a" style="left:1138px;top:138px;width:5px;height:1px;background:#000"></div>
<div class="a" style="left:1140px;top:135px;width:1px;height:3px;background:#000"></div>
<svg class="a" style="left:477px;top:121px" width="11" height="18" viewBox="0 0 11 18"><path d="M0.5 0.5h10v2L6 8.5 10.5 15v2.5H0.5V15L5 8.5 0.5 2.5z" fill="#fff" stroke="#777"/></svg>
<svg class="a" style="left:1141px;top:129px" width="11" height="10" viewBox="0 0 11 10"><path d="M5.5 0.5L10.5 7v2.5H0.5V7z" fill="#fff" stroke="#777"/></svg>
<div class="a" style="left:7px;top:259px;width:17px;height:710px;background:#fff"></div>
<div class="a" style="left:6px;top:183px;width:18px;height:76px;background:#efefef;border:1px solid #a0a0a0"></div>
<div class="a" style="left:15px;top:192px;width:1px;height:1px;background:#000"></div>
<div class="a" style="left:15px;top:201px;width:1px;height:1px;background:#000"></div>
<div class="a" style="left:14px;top:211px;width:3px;height:1px;background:#000"></div>
<div class="a" style="left:15px;top:221px;width:1px;height:1px;background:#000"></div>
<div class="a" style="left:15px;top:230px;width:1px;height:1px;background:#000"></div>
<div class="a" style="left:15px;top:240px;width:1px;height:1px;background:#000"></div>
<div class="a" style="left:15px;top:249px;width:1px;height:1px;background:#000"></div>
<div class="a" style="left:15px;top:269px;width:1px;height:1px;background:#000"></div>
<div class="a" style="left:15px;top:278px;width:1px;height:1px;background:#000"></div>
<div class="a" style="left:15px;top:288px;width:1px;height:1px;background:#000"></div>
<div class="a" style="left:15px;top:297px;width:1px;height:1px;background:#000"></div>
<div class="a" style="left:14px;top:307px;width:3px;height:1px;background:#000"></div>
<div class="a" style="left:15px;top:317px;width:1px;height:1px;background:#000"></div>
<div class="a" style="left:15px;top:326px;width:1px;height:1px;background:#000"></div>
<div class="a" style="left:15px;top:336px;width:1px;height:1px;background:#000"></div>
<div class="a" style="left:15px;top:345px;width:1px;height:1px;background:#000"></div>
<div class="t" style="left:12px;top:349px;font-size:12px;color:#2a1a08;transform:rotate(-90deg);transform-origin:center;width:12px;text-align:center;line-height:12px;height:12px">1</div>
<div class="a" style="left:15px;top:365px;width:1px;height:1px;background:#000"></div>
<div class="a" style="left:15px;top:374px;width:1px;height:1px;background:#000"></div>
<div class="a" style="left:15px;top:384px;width:1px;height:1px;background:#000"></div>
<div class="a" style="left:15px;top:393px;width:1px;height:1px;background:#000"></div>
<div class="a" style="left:14px;top:403px;width:3px;height:1px;background:#000"></div>
<div class="a" style="left:15px;top:413px;width:1px;height:1px;background:#000"></div>
<div class="a" style="left:15px;top:422px;width:1px;height:1px;background:#000"></div>
<div class="a" style="left:15px;top:432px;width:1px;height:1px;background:#000"></div>
<div class="a" style="left:15px;top:441px;width:1px;height:1px;background:#000"></div>
<div class="t" style="left:12px;top:445px;font-size:12px;color:#2a1a08;transform:rotate(-90deg);transform-origin:center;width:12px;text-align:center;line-height:12px;height:12px">2</div>
<div class="a" style="left:15px;top:461px;width:1px;height:1px;background:#000"></div>
<div class="a" style="left:15px;top:470px;width:1px;height:1px;background:#000"></div>
<div class="a" style="left:15px;top:480px;width:1px;height:1px;background:#000"></div>
<div class="a" style="left:15px;top:489px;width:1px;height:1px;background:#000"></div>
<div class="a" style="left:14px;top:499px;width:3px;height:1px;background:#000"></div>
<div class="a" style="left:15px;top:509px;width:1px;height:1px;background:#000"></div>
<div class="a" style="left:15px;top:518px;width:1px;height:1px;background:#000"></div>
<div class="a" style="left:15px;top:528px;width:1px;height:1px;background:#000"></div>
<div class="a" style="left:15px;top:537px;width:1px;height:1px;background:#000"></div>
<div class="t" style="left:12px;top:541px;font-size:12px;color:#2a1a08;transform:rotate(-90deg);transform-origin:center;width:12px;text-align:center;line-height:12px;height:12px">3</div>
<div class="a" style="left:15px;top:557px;width:1px;height:1px;background:#000"></div>
<div class="a" style="left:15px;top:566px;width:1px;height:1px;background:#000"></div>
<div class="a" style="left:15px;top:576px;width:1px;height:1px;background:#000"></div>
<div class="a" style="left:15px;top:585px;width:1px;height:1px;background:#000"></div>
<div class="a" style="left:14px;top:595px;width:3px;height:1px;background:#000"></div>
<div class="a" style="left:15px;top:605px;width:1px;height:1px;background:#000"></div>
<div class="a" style="left:15px;top:614px;width:1px;height:1px;background:#000"></div>
<div class="a" style="left:15px;top:624px;width:1px;height:1px;background:#000"></div>
<div class="a" style="left:15px;top:633px;width:1px;height:1px;background:#000"></div>
<div class="t" style="left:12px;top:637px;font-size:12px;color:#2a1a08;transform:rotate(-90deg);transform-origin:center;width:12px;text-align:center;line-height:12px;height:12px">4</div>
<div class="a" style="left:15px;top:653px;width:1px;height:1px;background:#000"></div>
<div class="a" style="left:15px;top:662px;width:1px;height:1px;background:#000"></div>
<div class="a" style="left:15px;top:672px;width:1px;height:1px;background:#000"></div>
<div class="a" style="left:15px;top:681px;width:1px;height:1px;background:#000"></div>
<div class="a" style="left:14px;top:691px;width:3px;height:1px;background:#000"></div>
<div class="a" style="left:15px;top:701px;width:1px;height:1px;background:#000"></div>
<div class="a" style="left:15px;top:710px;width:1px;height:1px;background:#000"></div>
<div class="a" style="left:15px;top:720px;width:1px;height:1px;background:#000"></div>
<div class="a" style="left:15px;top:729px;width:1px;height:1px;background:#000"></div>
<div class="t" style="left:12px;top:733px;font-size:12px;color:#2a1a08;transform:rotate(-90deg);transform-origin:center;width:12px;text-align:center;line-height:12px;height:12px">5</div>
<div class="a" style="left:15px;top:749px;width:1px;height:1px;background:#000"></div>
<div class="a" style="left:15px;top:758px;width:1px;height:1px;background:#000"></div>
<div class="a" style="left:15px;top:768px;width:1px;height:1px;background:#000"></div>
<div class="a" style="left:15px;top:777px;width:1px;height:1px;background:#000"></div>
<div class="a" style="left:14px;top:787px;width:3px;height:1px;background:#000"></div>
<div class="a" style="left:15px;top:797px;width:1px;height:1px;background:#000"></div>
<div class="a" style="left:15px;top:806px;width:1px;height:1px;background:#000"></div>
<div class="a" style="left:15px;top:816px;width:1px;height:1px;background:#000"></div>
<div class="a" style="left:15px;top:825px;width:1px;height:1px;background:#000"></div>
<div class="t" style="left:12px;top:829px;font-size:12px;color:#2a1a08;transform:rotate(-90deg);transform-origin:center;width:12px;text-align:center;line-height:12px;height:12px">6</div>
<div class="a" style="left:15px;top:845px;width:1px;height:1px;background:#000"></div>
<div class="a" style="left:15px;top:854px;width:1px;height:1px;background:#000"></div>
<div class="a" style="left:15px;top:864px;width:1px;height:1px;background:#000"></div>
<div class="a" style="left:15px;top:873px;width:1px;height:1px;background:#000"></div>
<div class="a" style="left:14px;top:883px;width:3px;height:1px;background:#000"></div>
<div class="a" style="left:15px;top:893px;width:1px;height:1px;background:#000"></div>
<div class="a" style="left:15px;top:902px;width:1px;height:1px;background:#000"></div>
<div class="a" style="left:15px;top:912px;width:1px;height:1px;background:#000"></div>
<div class="a" style="left:15px;top:921px;width:1px;height:1px;background:#000"></div>
<div class="t" style="left:12px;top:925px;font-size:12px;color:#2a1a08;transform:rotate(-90deg);transform-origin:center;width:12px;text-align:center;line-height:12px;height:12px">7</div>
<div class="a" style="left:15px;top:941px;width:1px;height:1px;background:#000"></div>
<div class="a" style="left:15px;top:950px;width:1px;height:1px;background:#000"></div>
<div class="a" style="left:15px;top:960px;width:1px;height:1px;background:#000"></div>
<div class="a" style="left:29px;top:144px;width:1571px;height:847px;background:#ababab;border-left:1px solid #000;border-top:1px solid #000"></div>
<div class="a" style="left:405px;top:182px;width:818px;height:809px;background:#fff;border:1px solid #000;border-bottom:none"></div>
<div class="a" style="left:482px;top:259px;width:665px;height:732px;border:1px solid #c0c0c0;border-bottom:none"></div>
<div class="a" style="left:1600px;top:145px;width:16px;height:846px;background:#efefef"></div>
<div class="a" style="left:1599px;top:145px;width:1px;height:846px;background:#fff"></div>
<div class="a" style="left:1607px;top:135px;width:2px;height:588px;background:#858585"></div>
<div class="a" style="left:1601px;top:941px;width:14px;height:14px;background:#fff;border:1px solid #e6e6e6;border-radius:4px"></div>
<div class="a" style="left:1601px;top:958px;width:14px;height:14px;background:#fff;border:1px solid #e6e6e6;border-radius:4px"></div>
<div class="a" style="left:1601px;top:976px;width:14px;height:14px;background:#fff;border:1px solid #e6e6e6;border-radius:4px"></div>
<svg class="a" style="left:1603px;top:943px" width="10" height="10" viewBox="0 0 10 10"><path d="M5 1L9 5H1z M5 5L9 9H1z" fill="#000"/></svg>
<svg class="a" style="left:1603px;top:960px" width="10" height="10" viewBox="0 0 10 10"><circle cx="5" cy="5" r="2.5" fill="#000"/></svg>
<svg class="a" style="left:1603px;top:978px" width="10" height="10" viewBox="0 0 10 10"><path d="M1 1H9L5 5z M1 5H9L5 9z" fill="#000"/></svg>
<div class="a" style="left:3px;top:991px;width:1614px;height:17px;background:#efefef"></div>
<div class="a" style="left:19px;top:999px;width:1563px;height:2px;background:#858585"></div>
<div class="a" style="left:1px;top:1008px;width:1918px;height:23px;background:#f0f0f0;border-radius:0 0 7px 7px"></div>
<div class="a" style="left:1px;top:1008px;width:1616px;height:1px;background:#fff"></div>
<div class="a" style="left:367px;top:1013px;width:1px;height:16px;background:#a0a0a0"></div>
<div class="a" style="left:714px;top:1013px;width:1px;height:16px;background:#a0a0a0"></div>
<div class="a" style="left:1094px;top:1013px;width:1px;height:16px;background:#a0a0a0"></div>
<div class="a" style="left:1138px;top:1013px;width:1px;height:16px;background:#a0a0a0"></div>
<div class="a" style="left:1171px;top:1013px;width:1px;height:16px;background:#a0a0a0"></div>
<div class="a" style="left:1187px;top:1013px;width:1px;height:16px;background:#a0a0a0"></div>
<div class="a" style="left:1216px;top:1013px;width:1px;height:16px;background:#a0a0a0"></div>
<div class="a" style="left:1654px;top:1013px;width:1px;height:16px;background:#a0a0a0"></div>
<div class="a" style="left:1730px;top:1013px;width:1px;height:16px;background:#a0a0a0"></div>
<div class="a" style="left:1873px;top:1013px;width:1px;height:16px;background:#a0a0a0"></div>
<div class="t" style="left:10.5px;top:1016px;font-size:12px;transform:scaleX(.95);transform-origin:left">Page 1 / 1</div>
<div class="t" style="left:372.5px;top:1016px;font-size:12px;transform:scaleX(.95);transform-origin:left">Default</div>
<div class="t" style="left:866.5px;top:1016px;font-size:12px;transform:scaleX(.95);transform-origin:left">English (USA)</div>
<div class="t" style="left:1098.5px;top:1016px;font-size:12px;transform:scaleX(.95);transform-origin:left">INSRT</div>
<div class="t" style="left:1142.5px;top:1016px;font-size:12px;transform:scaleX(.95);transform-origin:left">STD</div>
<div class="t" style="left:1879px;top:1016px;font-size:11.5px">100 %</div>
<div class="a" style="left:1617px;top:117px;width:302px;height:891px;background:#f0f0f0"></div>
<div class="a" style="left:1617px;top:117px;width:1px;height:891px;background:#fff"></div>
<div class="a" style="left:1623px;top:117px;width:1px;height:891px;background:#a0a0a0"></div>
<div class="a" style="left:1623px;top:1007px;width:295px;height:1px;background:#a0a0a0"></div>
<div class="a" style="left:1917px;top:117px;width:1px;height:891px;background:#a0a0a0"></div>
<div class="a" style="left:1624px;top:117px;width:1px;height:890px;background:#fff"></div>
<div class="a" style="left:1627px;top:120px;width:252px;height:886px;border:1px solid #a0a0a0;background:#f0f0f0"></div>
<div class="a" style="left:1628px;top:147px;width:250px;height:1px;background:#a0a0a0"></div>
<div class="t" style="left:1638px;top:129px;font-size:12px;font-weight:700;color:#0a0a1a">Properties</div>
<svg class="a" style="left:1865px;top:128px" width="9" height="9" viewBox="0 0 9 9"><path d="M1 1L8 8M8 1L1 8" stroke="#3c4650" stroke-width="1.6"/></svg>
<div class="a" style="left:1633px;top:156px;width:9px;height:9px;border:1px solid #444;background:#fff"></div>
<div class="a" style="left:1635px;top:160px;width:5px;height:1px;background:#000"></div>
<div class="t" style="left:1647px;top:156px;font-size:12px;font-weight:700;color:#0a0a1a">Text</div>
<div class="a" style="left:1863px;top:160px;width:2px;height:2px;background:#111"></div>
<div class="a" style="left:1867px;top:160px;width:2px;height:2px;background:#111"></div>
<div class="a" style="left:1871px;top:160px;width:2px;height:2px;background:#111"></div>
<div class="a" style="left:1635px;top:176px;width:173px;height:23px;background:#fff;border:1px solid #a0a0a0"></div>
<div class="t" style="left:1639px;top:182px;font-size:12px">Times New Roman</div>
<div class="a" style="left:1791px;top:178px;width:16px;height:19px;background:#fff;border:1px solid #dcdcdc;border-radius:2px"></div>
<svg class="a" style="left:1795px;top:185px" width="9" height="5" viewBox="0 0 9 5"><path d="M0.5 0.5l4 4 4-4" stroke="#555" fill="none"/></svg>
<div class="a" style="left:1815px;top:176px;width:56px;height:23px;background:#fff;border:1px solid #a0a0a0"></div>
<div class="t" style="left:1819px;top:182px;font-size:12px">12</div>
<div class="a" style="left:1852px;top:178px;width:16px;height:19px;background:#fff;border:1px solid #dcdcdc;border-radius:2px"></div>
<svg class="a" style="left:1856px;top:185px" width="9" height="5" viewBox="0 0 9 5"><path d="M0.5 0.5l4 4 4-4" stroke="#555" fill="none"/></svg>
<div class="a" style="left:1635px;top:206px;width:140px;height:31px;border:1px solid #d0d0d0"></div>
<div class="a" style="left:1815px;top:206px;width:54px;height:31px;border:1px solid #d0d0d0"></div>
<div class="a" style="left:1635px;top:243px;width:54px;height:31px;border:1px solid #d0d0d0"></div>
<div class="a" style="left:1702px;top:243px;width:40px;height:31px;border:1px solid #d0d0d0"></div>
<div class="a" style="left:1764px;top:243px;width:40px;height:31px;border:1px solid #d0d0d0"></div>
<div class="a" style="left:1813px;top:243px;width:40px;height:31px;border:1px solid #d0d0d0"></div>
<div class="t" style="left:1644px;top:212px;font-family:'Liberation Sans';font-weight:700;font-size:18.5px;color:#1c3550;transform:scaleX(.88);transform-origin:left">B</div>
<svg class="a" style="left:1668px;top:213px" width="13" height="15" viewBox="0 0 13 15"><path d="M5.5 1.2h6M1 13.8h6M9 1.2L4 13.8" stroke="#1c3550" stroke-width="1.7" fill="none"/></svg>
<svg class="a" style="left:1692px;top:213px" width="14" height="16" viewBox="0 0 14 16"><path d="M2.7 1v7.2a4.3 4.3 0 008.6 0V1" stroke="#1c3550" stroke-width="1.5" fill="none"/><path d="M1 14.5h12" stroke="#1c3550" stroke-width="1"/></svg>
<svg class="a" style="left:1714px;top:219px" width="5" height="3" viewBox="0 0 5 3"><path d="M0 0h5L2.5 3z" fill="#000"/></svg>
<svg class="a" style="left:1726px;top:215px" width="18" height="11" viewBox="0 0 18 11"><text x="0.5" y="9" font-family="Liberation Sans" font-weight="700" font-size="8" fill="#222" letter-spacing="-.2">ABC</text><path d="M0 5.5h17" stroke="#111" stroke-width="1"/></svg>
<svg class="a" style="left:1751px;top:212px" width="18" height="18" viewBox="0 0 18 18"><text x="6" y="17" font-family="Liberation Sans" font-weight="700" font-size="15" fill="#8a8a8a">A</text><text x="0" y="14" font-family="Liberation Sans" font-weight="700" font-size="15" fill="#4a7aa8">A</text></svg>
<svg class="a" style="left:1820px;top:212px" width="18" height="17" viewBox="0 0 18 17"><path d="M0.5 0.5h3.2v15h-3.2z" fill="#dfe8f2" stroke="#3a4a5a" stroke-width=".9"/>
<path d="M1.2 3.5h1.5M1.2 6.5h1.5M1.2 9.5h1.5M1.2 12.5h1.5" stroke="#7a8a9a" stroke-width=".7"/>
<text x="4.2" y="16" font-family="Liberation Sans" font-weight="700" font-size="14" fill="#4a7eae" stroke="#0e2a48" stroke-width=".7">A</text>
<path d="M10.5 5l3.3-3.5 3.3 3.5z" fill="#ff7a20" stroke="#9a2000" stroke-width=".8" stroke-linejoin="round"/></svg>
<svg class="a" style="left:1845px;top:212px" width="18" height="17" viewBox="0 0 18 17"><path d="M0.5 0.5h3.2v15h-3.2z" fill="#dfe8f2" stroke="#3a4a5a" stroke-width=".9"/>
<path d="M1.2 3.5h1.5M1.2 6.5h1.5M1.2 9.5h1.5M1.2 12.5h1.5" stroke="#7a8a9a" stroke-width=".7"/>
<text x="6.5" y="16" font-family="Liberation Sans" font-weight="700" font-size="11" fill="#4a7eae" stroke="#0e2a48" stroke-width=".6">A</text>
<path d="M10.5 1.2h6.6l-3.3 3.5z" fill="#ff7a20" stroke="#9a2000" stroke-width=".8" stroke-linejoin="round"/></svg>
<svg class="a" style="left:1640px;top:249px" width="18" height="18" viewBox="0 0 18 18"><text x="0" y="16" font-family="Liberation Sans" font-weight="700" font-size="14" fill="#8a9096">A</text>
<text x="7" y="10" font-family="Liberation Sans" font-weight="700" font-size="9" fill="#3a6e9e" stroke="#0e2a48" stroke-width=".5">A</text>
<path d="M8 17l3-3.5 3 3.5z" fill="#ff6a10" stroke="#a02000" stroke-width=".7"/></svg>
<svg class="a" style="left:1665px;top:249px" width="18" height="18" viewBox="0 0 18 18"><text x="0" y="16" font-family="Liberation Sans" font-weight="700" font-size="14" fill="#8a9096">A</text>
<text x="7.5" y="16.5" font-family="Liberation Sans" font-weight="700" font-size="9" fill="#3a6e9e" stroke="#0e2a48" stroke-width=".5">A</text>
<path d="M8.5 1h6l-3 3.5z" fill="#ff6a10" stroke="#a02000" stroke-width=".7"/></svg>
<svg class="a" style="left:1707px;top:249px" width="17" height="17" viewBox="0 0 17 17"><text x="0" y="9" font-family="Liberation Sans" font-weight="700" font-size="9" fill="#555">A</text><text x="9" y="9" font-family="Liberation Sans" font-weight="700" font-size="9" fill="#555">V</text>
<path d="M5.5 0.5l3.5 8" stroke="#e02020" stroke-width="1"/>
<path d="M1 13.5l3-3v2h7v-2l3 3-3 3v-2H4v2z" fill="#bfe0ff" stroke="#1e5cae" stroke-width=".9" stroke-linejoin="round"/></svg>
<svg class="a" style="left:1731px;top:256px" width="5" height="3" viewBox="0 0 5 3"><path d="M0 0h5L2.5 3z" fill="#000"/></svg>
<svg class="a" style="left:1769px;top:249px" width="17" height="17" viewBox="0 0 17 17"><path d="M2.5 11L6 1h3.5l3.5 10h-2.8l-.7-2H6l-.7 2z M6.7 6.8h2l-1-3z" fill="#5a8ab0" stroke="#12314f" stroke-width=".9" fill-rule="evenodd"/>
<rect x="0" y="12.5" width="16" height="4" fill="#800000"/></svg>
<svg class="a" style="left:1793px;top:256px" width="5" height="3" viewBox="0 0 5 3"><path d="M0 0h5L2.5 3z" fill="#000"/></svg>
<svg class="a" style="left:1818px;top:249px" width="17" height="17" viewBox="0 0 17 17"><rect x="0" y="1" width="11" height="9" fill="#ffd820"/>
<text x="0" y="8.5" font-family="Liberation Sans" font-size="8.5" fill="#111">ab</text>
<path d="M6.5 9.5l6.5-6.5 2.8 2.8-6.5 6.5-3 1z" fill="#e8eaec" stroke="#4a5460" stroke-width=".9"/>
<path d="M6 11l1.5 1.5-2.5 .8z" fill="#f08020"/>
<rect x="0" y="12.5" width="16" height="4" fill="#ffff00"/></svg>
<svg class="a" style="left:1842px;top:256px" width="5" height="3" viewBox="0 0 5 3"><path d="M0 0h5L2.5 3z" fill="#000"/></svg>
<div class="a" style="left:1628px;top:283px;width:250px;height:1px;background:#a0a0a0"></div>
<div class="a" style="left:1633px;top:292px;width:9px;height:9px;border:1px solid #444;background:#fff"></div>
<div class="a" style="left:1635px;top:296px;width:5px;height:1px;background:#000"></div>
<div class="t" style="left:1647px;top:292px;font-size:12px;font-weight:700;color:#0a0a1a">Paragraph</div>
<div class="a" style="left:1863px;top:296px;width:2px;height:2px;background:#111"></div>
<div class="a" style="left:1867px;top:296px;width:2px;height:2px;background:#111"></div>
<div class="a" style="left:1871px;top:296px;width:2px;height:2px;background:#111"></div>
<div class="a" style="left:1635px;top:310px;width:104px;height:31px;border:1px solid #d0d0d0"></div>
<div class="a" style="left:1637px;top:312px;width:25px;height:26px;background:#cce4f7;border:1px solid #99d1ff;border-radius:3px"></div>
<div class="a" style="left:1643px;top:321.0px;width:12px;height:1px;background:#1a2430"></div>
<div class="a" style="left:1643px;top:323.0px;width:9px;height:1px;background:#1a2430"></div>
<div class="a" style="left:1643px;top:325.0px;width:12px;height:1px;background:#1a2430"></div>
<div class="a" style="left:1643px;top:327.0px;width:9px;height:1px;background:#1a2430"></div>
<div class="a" style="left:1643px;top:329.0px;width:12px;height:1px;background:#1a2430"></div>
<div class="a" style="left:1668px;top:321.0px;width:12px;height:1px;background:#1a2430"></div>
<div class="a" style="left:1671px;top:323.0px;width:6px;height:1px;background:#1a2430"></div>
<div class="a" style="left:1668px;top:325.0px;width:12px;height:1px;background:#1a2430"></div>
<div class="a" style="left:1671px;top:327.0px;width:6px;height:1px;background:#1a2430"></div>
<div class="a" style="left:1668px;top:329.0px;width:12px;height:1px;background:#1a2430"></div>
<div class="a" style="left:1693px;top:321.0px;width:12px;height:1px;background:#1a2430"></div>
<div class="a" style="left:1696px;top:323.0px;width:9px;height:1px;background:#1a2430"></div>
<div class="a" style="left:1693px;top:325.0px;width:12px;height:1px;background:#1a2430"></div>
<div class="a" style="left:1696px;top:327.0px;width:9px;height:1px;background:#1a2430"></div>
<div class="a" style="left:1693px;top:329.0px;width:12px;height:1px;background:#1a2430"></div>
<div class="a" style="left:1718px;top:321.0px;width:12px;height:1px;background:#1a2430"></div>
<div class="a" style="left:1718px;top:323.0px;width:12px;height:1px;background:#1a2430"></div>
<div class="a" style="left:1718px;top:325.0px;width:12px;height:1px;background:#1a2430"></div>
<div class="a" style="left:1718px;top:327.0px;width:12px;height:1px;background:#1a2430"></div>
<div class="a" style="left:1718px;top:329.0px;width:12px;height:1px;background:#1a2430"></div>
<div class="a" style="left:1635px;top:346px;width:76px;height:31px;border:1px solid #d0d0d0"></div>
<svg class="a" style="left:1640px;top:354px" width="16" height="13" viewBox="0 0 16 13"><circle cx="2.5" cy="2.5" r="1.5" fill="#4a7aa0" stroke="#0e2a48" stroke-width="1"/><circle cx="2.5" cy="9.5" r="1.5" fill="#4a7aa0" stroke="#0e2a48" stroke-width="1"/>
<path d="M6 1.5h8M6 3.5h5M6 8.5h8M6 10.5h5" stroke="#111" stroke-width="1"/></svg>
<svg class="a" style="left:1664px;top:358px" width="5" height="3" viewBox="0 0 5 3"><path d="M0 0h5L2.5 3z" fill="#000"/></svg>
<svg class="a" style="left:1676px;top:354px" width="17" height="13" viewBox="0 0 17 13"><path d="M1.5 1h3.5M1.5 5h3.5M3.25 1v4M0.8 8h5M0.8 12h5M2.3 8v4M4.3 8v4" stroke="#3a76a8" stroke-width="1"/>
<path d="M8 1.5h8M8 3.5h5M8 8.5h8M8 10.5h5" stroke="#111" stroke-width="1"/></svg>
<svg class="a" style="left:1700px;top:358px" width="5" height="3" viewBox="0 0 5 3"><path d="M0 0h5L2.5 3z" fill="#000"/></svg>
<div class="a" style="left:1737px;top:346px;width:54px;height:31px;border:1px solid #d0d0d0"></div>
<svg class="a" style="left:1741px;top:353px" width="32" height="17" viewBox="0 0 32 17"><path d="M1 9l6-6 6 6-6 6z" fill="#a8d0f8" stroke="#2d6aa8" stroke-width=".9"/>
<ellipse cx="7" cy="3.5" rx="2" ry="2.5" fill="#cfe4f8" stroke="#2d6aa8" stroke-width=".8"/>
<path d="M11 4q3 2 1.5 7" stroke="#222" stroke-width="1.3" fill="none"/>
<rect x="16.5" y="0.5" width="15" height="15.5" fill="#fff" stroke="#3a5a8a"/>
<rect x="18.5" y="2.5" width="11" height="11.5" fill="none" stroke="#000" stroke-width="1.4"/></svg>
<svg class="a" style="left:1780px;top:358px" width="5" height="3" viewBox="0 0 5 3"><path d="M0 0h5L2.5 3z" fill="#000"/></svg>
<div class="t" style="left:1635px;top:382px;font-size:12px;color:#111"><span style="text-decoration:underline">S</span>pacing:</div>
<div class="t" style="left:1760px;top:382px;font-size:12px;color:#111"><span style="text-decoration:underline">I</span>ndent:</div>
<div class="a" style="left:1635px;top:396px;width:54px;height:31px;border:1px solid #d0d0d0"></div>
<svg class="a" style="left:1641px;top:403px" width="17" height="16" viewBox="0 0 17 16"><path d="M0.5 5.5L3.5 1l3 4.5z" fill="#a8d0f8" stroke="#1e4e8e" stroke-width=".9" stroke-linejoin="round"/>
<path d="M0.5 10.5h6l-3 4.5z" fill="#a8d0f8" stroke="#1e4e8e" stroke-width=".9" stroke-linejoin="round"/>
<path d="M8 2.5h8M8 4.5h8M8 6.5h8M8 11.5h8M8 13.5h8M8 15.5h8" stroke="#2a3440" stroke-width="1"/></svg>
<svg class="a" style="left:1666px;top:403px" width="17" height="16" viewBox="0 0 17 16"><path d="M0.5 1h6l-3 4.5z" fill="#a8d0f8" stroke="#1e4e8e" stroke-width=".9" stroke-linejoin="round"/>
<path d="M0.5 15L3.5 10.5l3 4.5z" fill="#a8d0f8" stroke="#1e4e8e" stroke-width=".9" stroke-linejoin="round"/>
<path d="M8 2.5h8M8 4.5h8M8 6.5h8M8 11.5h8M8 13.5h8M8 15.5h8" stroke="#2a3440" stroke-width="1"/></svg>
<div class="a" style="left:1760px;top:396px;width:84px;height:31px;border:1px solid #d0d0d0"></div>
<svg class="a" style="left:1765px;top:403px" width="18" height="17" viewBox="0 0 18 17"><path d="M6 3.5h11M6 13.5h11M9.5 1.5v4M9.5 11.5v4" stroke="#1a2430" stroke-width="1"/><rect x="10" y="6" width="7" height="2" fill="#1e7ad8"/><rect x="10" y="9" width="5" height="2" fill="#1e7ad8"/><path d="M1 8.2L5 4.2v2.3h3.6v3.4H5v2.3z" fill="#ff8a1a" stroke="#7a1a00" stroke-width=".9" stroke-linejoin="round"/></svg>
<svg class="a" style="left:1790px;top:403px" width="18" height="17" viewBox="0 0 18 17"><path d="M6 3.5h11M6 13.5h11M9.5 1.5v4M9.5 11.5v4" stroke="#1a2430" stroke-width="1"/><rect x="10" y="6" width="7" height="2" fill="#1e7ad8"/><rect x="10" y="9" width="5" height="2" fill="#1e7ad8"/><path d="M8.8 8.2L4.8 4.2v2.3H1.2v3.4h3.6v2.3z" fill="#ff8a1a" stroke="#7a1a00" stroke-width=".9" stroke-linejoin="round"/></svg>
<svg class="a" style="left:1815px;top:403px" width="22" height="16" viewBox="0 0 22 16"><path d="M1 3.5h3v-2.5l4 4-4 4V6.5H1z" fill="#8ce040" stroke="#2a8a10" stroke-width=".9" stroke-linejoin="round"/>
<path d="M10 3.5h4M10 2v3M14 2v3" stroke="#2a5a8a" stroke-width=".8"/>
<path d="M15 2.5h5M16 4.5h4M16 6.5h4M16 8.5h4M16 10.5h4M16 12.5h4M16 14.5h4" stroke="#3a6a9a" stroke-width="1"/></svg>
<div class="a" style="left:1657px;top:438px;width:96px;height:23px;background:#fff;border:1px solid #a0a0a0"></div>
<div class="t" style="left:1660px;top:444px;font-size:12px;color:#000;transform:scaleX(.93);transform-origin:left">0.00 "</div>
<div class="a" style="left:1736px;top:440px;width:15px;height:9px;background:#f0f0f0;border:1px solid #d0d0d0"></div>
<div class="a" style="left:1736px;top:449px;width:15px;height:9px;background:#f0f0f0;border:1px solid #d0d0d0"></div>
<svg class="a" style="left:1740px;top:442px" width="7" height="4" viewBox="0 0 7 4"><path d="M3.5 0.3L6.5 3.8H0.5z" fill="#111"/></svg>
<svg class="a" style="left:1740px;top:452px" width="7" height="4" viewBox="0 0 7 4"><path d="M0.5 0.2h6L3.5 3.7z" fill="#111"/></svg>
<div class="a" style="left:1782px;top:438px;width:89px;height:23px;background:#fff;border:1px solid #a0a0a0"></div>
<div class="t" style="left:1785px;top:444px;font-size:12px;color:#000;transform:scaleX(.93);transform-origin:left">0.00 "</div>
<div class="a" style="left:1854px;top:440px;width:15px;height:9px;background:#f0f0f0;border:1px solid #d0d0d0"></div>
<div class="a" style="left:1854px;top:449px;width:15px;height:9px;background:#f0f0f0;border:1px solid #d0d0d0"></div>
<svg class="a" style="left:1858px;top:442px" width="7" height="4" viewBox="0 0 7 4"><path d="M3.5 0.3L6.5 3.8H0.5z" fill="#111"/></svg>
<svg class="a" style="left:1858px;top:452px" width="7" height="4" viewBox="0 0 7 4"><path d="M0.5 0.2h6L3.5 3.7z" fill="#111"/></svg>
<div class="a" style="left:1657px;top:469px;width:96px;height:23px;background:#fff;border:1px solid #a0a0a0"></div>
<div class="t" style="left:1660px;top:475px;font-size:12px;color:#000;transform:scaleX(.93);transform-origin:left">0.00 "</div>
<div class="a" style="left:1736px;top:471px;width:15px;height:9px;background:#f0f0f0;border:1px solid #d0d0d0"></div>
<div class="a" style="left:1736px;top:480px;width:15px;height:9px;background:#f0f0f0;border:1px solid #d0d0d0"></div>
<svg class="a" style="left:1740px;top:473px" width="7" height="4" viewBox="0 0 7 4"><path d="M3.5 0.3L6.5 3.8H0.5z" fill="#111"/></svg>
<svg class="a" style="left:1740px;top:483px" width="7" height="4" viewBox="0 0 7 4"><path d="M0.5 0.2h6L3.5 3.7z" fill="#111"/></svg>
<div class="a" style="left:1782px;top:469px;width:89px;height:23px;background:#fff;border:1px solid #a0a0a0"></div>
<div class="t" style="left:1785px;top:475px;font-size:12px;color:#000;transform:scaleX(.93);transform-origin:left">0.00 "</div>
<div class="a" style="left:1854px;top:471px;width:15px;height:9px;background:#f0f0f0;border:1px solid #d0d0d0"></div>
<div class="a" style="left:1854px;top:480px;width:15px;height:9px;background:#f0f0f0;border:1px solid #d0d0d0"></div>
<svg class="a" style="left:1858px;top:473px" width="7" height="4" viewBox="0 0 7 4"><path d="M3.5 0.3L6.5 3.8H0.5z" fill="#111"/></svg>
<svg class="a" style="left:1858px;top:483px" width="7" height="4" viewBox="0 0 7 4"><path d="M0.5 0.2h6L3.5 3.7z" fill="#111"/></svg>
<div class="a" style="left:1782px;top:501px;width:89px;height:23px;background:#fff;border:1px solid #a0a0a0"></div>
<div class="t" style="left:1785px;top:507px;font-size:12px;color:#000;transform:scaleX(.93);transform-origin:left">0.00 "</div>
<div class="a" style="left:1854px;top:503px;width:15px;height:9px;background:#f0f0f0;border:1px solid #d0d0d0"></div>
<div class="a" style="left:1854px;top:512px;width:15px;height:9px;background:#f0f0f0;border:1px solid #d0d0d0"></div>
<svg class="a" style="left:1858px;top:505px" width="7" height="4" viewBox="0 0 7 4"><path d="M3.5 0.3L6.5 3.8H0.5z" fill="#111"/></svg>
<svg class="a" style="left:1858px;top:515px" width="7" height="4" viewBox="0 0 7 4"><path d="M0.5 0.2h6L3.5 3.7z" fill="#111"/></svg>
<svg class="a" style="left:1634px;top:442px" width="17" height="17" viewBox="0 0 17 17"><path d="M6 1h4M8 1v5M6 6h4" stroke="#2a5a8a" stroke-width="1"/>
<path d="M1 9.5h14M1 12h14M1 14.5h14" stroke="#3a6a9a" stroke-width="1.3"/></svg>
<svg class="a" style="left:1634px;top:473px" width="17" height="17" viewBox="0 0 17 17"><path d="M1 2h14M1 4.5h14M1 7h14" stroke="#3a6a9a" stroke-width="1.3"/>
<path d="M6 10h4M8 10v5M6 15h4" stroke="#2a5a8a" stroke-width="1"/></svg>
<svg class="a" style="left:1759px;top:441px" width="17" height="18" viewBox="0 0 17 18"><path d="M1 3.5h5M1 2v3M6 2v3" stroke="#2a5a8a" stroke-width="1"/>
<path d="M7 3h7M9 6h5M9 9h5M9 12h5M9 15h5" stroke="#3a6a9a" stroke-width="1.4"/></svg>
<svg class="a" style="left:1759px;top:472px" width="17" height="18" viewBox="0 0 17 18"><path d="M10 3.5h5M10 2v3M15 2v3" stroke="#2a5a8a" stroke-width="1"/>
<path d="M1 3h7M1 6h5M1 9h5M1 12h5M1 15h5" stroke="#3a6a9a" stroke-width="1.4"/></svg>
<svg class="a" style="left:1759px;top:504px" width="17" height="17" viewBox="0 0 17 17"><path d="M1 3.5h5M1 2v3M6 2v3" stroke="#2a5a8a" stroke-width="1"/>
<path d="M8 3h7M1 6h14M1 9h14M1 12h14M1 15h14" stroke="#3a6a9a" stroke-width="1.4"/></svg>
<div class="a" style="left:1635px;top:499px;width:42px;height:31px;border:1px solid #d0d0d0"></div>
<svg class="a" style="left:1640px;top:508px" width="18" height="11" viewBox="0 0 18 11"><path d="M3 0.5l2.5 2.5h-5zM3 10.5l2.5-2.5h-5zM3 2v7" fill="#2a5a8a" stroke="#2a5a8a" stroke-width="1"/>
<path d="M7 2h10M7 4.5h10M7 7h10M7 9.5h10" stroke="#3a6a9a" stroke-width="1.3"/></svg>
<svg class="a" style="left:1666px;top:512px" width="5" height="3" viewBox="0 0 5 3"><path d="M0 0h5L2.5 3z" fill="#000"/></svg>
<div class="a" style="left:1628px;top:539px;width:250px;height:1px;background:#a0a0a0"></div>
<div class="a" style="left:1633px;top:548px;width:9px;height:9px;border:1px solid #444;background:#fff"></div>
<div class="a" style="left:1635px;top:552px;width:5px;height:1px;background:#000"></div>
<div class="a" style="left:1637px;top:550px;width:1px;height:5px;background:#000"></div>
<div class="t" style="left:1647px;top:548px;font-size:12px;font-weight:700;color:#0a0a1a">Page</div>
<div class="a" style="left:1863px;top:552px;width:2px;height:2px;background:#111"></div>
<div class="a" style="left:1867px;top:552px;width:2px;height:2px;background:#111"></div>
<div class="a" style="left:1871px;top:552px;width:2px;height:2px;background:#111"></div>
<div class="a" style="left:1628px;top:566px;width:250px;height:1px;background:#a0a0a0"></div>
<div class="a" style="left:1891px;top:128px;width:16px;height:1.5px;background:#333c45"></div>
<div class="a" style="left:1891px;top:132px;width:16px;height:1.5px;background:#333c45"></div>
<div class="a" style="left:1891px;top:136px;width:16px;height:1.5px;background:#333c45"></div>
<svg class="a" style="left:1899px;top:140px" width="8" height="5" viewBox="0 0 8 5"><path d="M0 0h7.5L3.75 4z" fill="#000"/></svg>
<div class="a" style="left:1888px;top:155px;width:23px;height:1px;background:#a0a0a0"></div>
<div class="a" style="left:1883px;top:159px;width:32px;height:32px;border:1px solid #a8a8a8;border-radius:4px"></div>
<svg class="a" style="left:1888px;top:163px" width="21" height="25" viewBox="0 0 21 25"><ellipse cx="10.5" cy="22.5" rx="8.5" ry="1.8" fill="#000" opacity=".13"/>
<path d="M1 5l9.5-4 9.5 4v11l-9.5 5-9.5-5z" fill="#7ed321"/>
<path d="M1 5l9.5 4v6L1 11z" fill="#1ea0f0"/>
<path d="M1 11l4.7 2v6L1 16z" fill="#2ab0ff"/>
<path d="M1 5l9.5-4 4.7 2-9.5 4z" fill="#52c0ff"/>
<path d="M5.7 7l9.5-4 4.8 2-9.5 4z" fill="#9ee040"/>
<path d="M10.5 9l9.5-4v11l-9.5 5z" fill="#70cc18"/>
<path d="M5.7 13l4.8 2v6l-4.8-2z" fill="#8ee030"/>
<path d="M10.5 15l9.5-4.5M10.5 9v12M1 11l9.5 4M5.8 3l9.5 4M15.2 3L5.8 7M5.8 7v12M15.2 7v12" stroke="#fff" stroke-width=".8" fill="none" opacity=".9"/></svg>
<svg class="a" style="left:1887px;top:197px" width="25" height="26" viewBox="0 0 25 26"><defs><radialGradient id="gsw" cx=".45" cy=".4" r=".6"><stop offset="0" stop-color="#0a1a2a"/><stop offset=".6" stop-color="#1a4a7a"/><stop offset="1" stop-color="#3a8ad8"/></radialGradient></defs>
<ellipse cx="12.5" cy="23.5" rx="10" ry="1.8" fill="#000" opacity=".13"/>
<path d="M5 21L9 7q6-2 9 3t-2 9z" fill="#2a86e0"/>
<path d="M8.5 8q5-3 9 1.5t-1 9q-3-3-1-6t-4-3z" fill="url(#gsw)"/>
<path d="M13 15q5-2 7 2t-3 5q1-4-4-7z" fill="#6ab82a"/>
<path d="M2.5 6q1-4 5-3.5t3 4q-2-2-4-1t-1.5 3z" fill="#d4700a"/>
<path d="M19.5 1.5l1.3 2.6 2.9.4-2.1 2 .5 2.9-2.6-1.4-2.6 1.4.5-2.9-2.1-2 2.9-.4z" fill="#f8d040" stroke="#e8b020" stroke-width=".4"/>
<path d="M12.5 0.5l.9 1.8 2 .3-1.4 1.4.3 2-1.8-.9-1.8.9.3-2-1.4-1.4 2-.3z" fill="#c060e0"/>
<path d="M3 9.5l.9 1.8 2 .3-1.4 1.4.3 2-1.8-.9-1.8.9.3-2L.1 11.6l2-.3z" fill="#f060c0"/>
<path d="M21 9.5l.8 1.6 1.8.3-1.3 1.2.3 1.8-1.6-.8-1.6.8.3-1.8-1.3-1.2 1.8-.3z" fill="#f04860"/></svg>
<svg class="a" style="left:1887px;top:232px" width="25" height="26" viewBox="0 0 25 26"><ellipse cx="13" cy="24" rx="10" ry="1.8" fill="#000" opacity=".13"/>
<g transform="rotate(-24 12 12)"><rect x="2" y="5" width="20" height="14" fill="#fff" stroke="#7a8490" stroke-width=".8"/>
<rect x="4" y="7" width="16" height="10" fill="#9cd0f8"/><path d="M4 14l16-2v5H4z" fill="#6cc030"/>
<path d="M6 7h4" stroke="#60d030" stroke-width="1.3"/>
<path d="M6.5 17v-5l3-2.5 3 2.5" fill="none" stroke="#1e4e9e" stroke-width="1.3"/>
<path d="M13 12.5h6" stroke="#8a5a2a" stroke-width="1.5"/></g></svg>
<svg class="a" style="left:1887px;top:268px" width="24" height="24" viewBox="0 0 24 24"><ellipse cx="12" cy="22.5" rx="9" ry="1.6" fill="#000" opacity=".13"/>
<circle cx="11.5" cy="11.5" r="9.8" fill="#fff" stroke="#f4a010" stroke-width="2.4"/>
<path d="M11.5 4v15M4 11.5h15" stroke="#b8b8b8" stroke-width=".8"/>
<text x="11.5" y="7.6" font-family="Liberation Sans" font-weight="700" font-size="5.6" fill="#222" text-anchor="middle">N</text>
<path d="M17 6l-4.3 6.8-2.5-2.5z" fill="#e03030"/><path d="M6 17l4.3-6.8 2.5 2.5z" fill="#2a7ad8"/>
<path d="M8 8l3.5 3.5L15 15" stroke="#999" stroke-width=".8"/>
<circle cx="11.5" cy="11.5" r="1.1" fill="#fff"/></svg>
<svg class="a" style="left:1661px;top:1014px" width="11" height="13" viewBox="0 0 11 13"><path d="M0.5 0.5h7l3 3v9h-10z" fill="#f6f8fa" stroke="#8a96a2"/></svg>
<svg class="a" style="left:1676px;top:1014px" width="21" height="13" viewBox="0 0 21 13"><path d="M0.5 0.5h7l2 2v10h-9z" fill="#dfe8f4" stroke="#1e4e8e"/><path d="M10.5 0.5h7l2 2v10h-9z" fill="#dfe8f4" stroke="#1e4e8e"/></svg>
<svg class="a" style="left:1701px;top:1014px" width="19" height="13" viewBox="0 0 19 13"><path d="M0.5 2.5l2-2h6.5v12h-8.5z" fill="#f6f8fa" stroke="#8a96a2"/><path d="M9.5 0.5h7l2 2v10h-9z" fill="#f6f8fa" stroke="#8a96a2"/></svg>
<svg class="a" style="left:1735px;top:1015px" width="13" height="13" viewBox="0 0 13 13"><circle cx="6" cy="6" r="5.3" fill="#f4f8fc" stroke="#777" stroke-width=".9"/><path d="M3 6h6" stroke="#0e2e58" stroke-width="1.4"/></svg>
<div class="a" style="left:1752px;top:1021px;width:97px;height:2px;background:#b8b8b8"></div>
<div class="a" style="left:1752px;top:1020px;width:97px;height:1px;background:#d8d8d8"></div>
<div class="a" style="left:1784px;top:1018px;width:1px;height:8px;background:#888"></div>
<svg class="a" style="left:1795px;top:1017px" width="10" height="10" viewBox="0 0 10 10"><circle cx="5" cy="5" r="4.2" fill="#a8c4ec" stroke="#6a8ab8" stroke-width=".9"/></svg>
<svg class="a" style="left:1853px;top:1015px" width="13" height="13" viewBox="0 0 13 13"><circle cx="6" cy="6" r="5.3" fill="#f4f8fc" stroke="#777" stroke-width=".9"/><path d="M3 6h6M6 3v6" stroke="#0e2e58" stroke-width="1.4"/></svg>
<svg class="a" style="left:1618px;top:544px" width="4" height="36" viewBox="0 0 4 36"><path d="M1 1l2.5 2L1 5z M1 33l2.5-2L1 29z" fill="#555"/>
<path d="M1 9.5h2M1 13.5h2M1 17.5h2M1 21.5h2M1 25.5h2" stroke="#666" stroke-width="1.3"/></svg>
</body></html>
